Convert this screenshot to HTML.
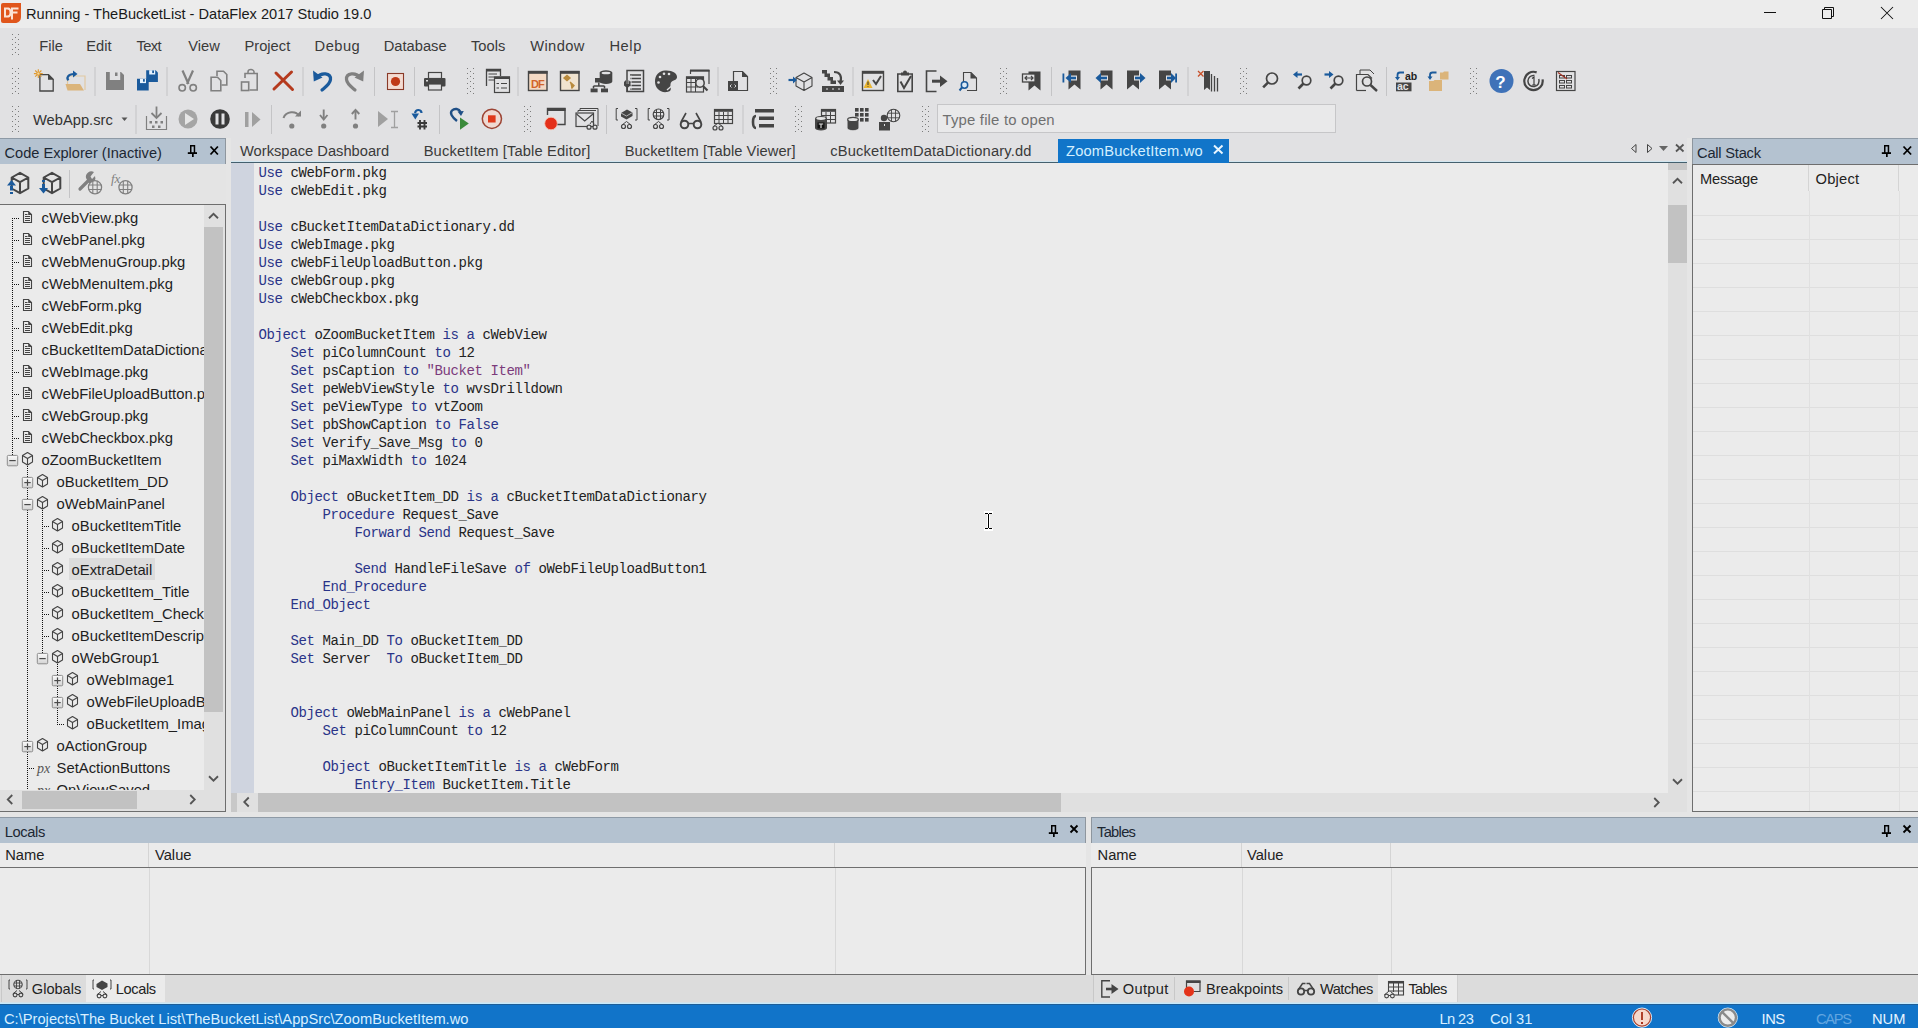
<!DOCTYPE html>
<html><head><meta charset="utf-8"><style>
html,body{margin:0;padding:0;background:#e1e1e3;}
body{width:1918px;height:1028px;position:relative;overflow:hidden;font-family:"Liberation Sans",sans-serif;}
body div, body svg{position:absolute;}
body div div{position:absolute;}
</style></head><body>
<div style="left:0px;top:0px;width:1918px;height:1028px;background:#e1e1e3;"></div>
<div style="left:0px;top:0px;width:1918px;height:28px;background:#ececec;"></div>
<div style="left:0px;top:138px;width:1918px;height:837px;background:#e5e5e5;"></div>
<div style="left:231px;top:138px;width:1456px;height:23px;background:#e1e1e3;"></div>
<div style="left:26px;top:5.24px;font:14.6px/19px 'Liberation Sans', sans-serif;color:#1a1a1a;white-space:pre;">Running - TheBucketList - DataFlex 2017 Studio 19.0</div>
<div style="left:39.3px;top:36.90px;font:14.7px/19px 'Liberation Sans', sans-serif;color:#3a3a3a;white-space:pre;">File</div>
<div style="left:86.3px;top:36.90px;font:14.7px/19px 'Liberation Sans', sans-serif;color:#3a3a3a;white-space:pre;">Edit</div>
<div style="left:136.4px;top:36.90px;font:14.7px/19px 'Liberation Sans', sans-serif;color:#3a3a3a;white-space:pre;letter-spacing:-0.55px;">Text</div>
<div style="left:188.2px;top:36.90px;font:14.7px/19px 'Liberation Sans', sans-serif;color:#3a3a3a;white-space:pre;">View</div>
<div style="left:244.5px;top:36.90px;font:14.7px/19px 'Liberation Sans', sans-serif;color:#3a3a3a;white-space:pre;">Project</div>
<div style="left:314.6px;top:36.90px;font:14.7px/19px 'Liberation Sans', sans-serif;color:#3a3a3a;white-space:pre;letter-spacing:0.45px;">Debug</div>
<div style="left:383.7px;top:36.90px;font:14.7px/19px 'Liberation Sans', sans-serif;color:#3a3a3a;white-space:pre;">Database</div>
<div style="left:471px;top:36.90px;font:14.7px/19px 'Liberation Sans', sans-serif;color:#3a3a3a;white-space:pre;">Tools</div>
<div style="left:530.2px;top:36.90px;font:14.7px/19px 'Liberation Sans', sans-serif;color:#3a3a3a;white-space:pre;letter-spacing:0.4px;">Window</div>
<div style="left:609.4px;top:36.90px;font:14.7px/19px 'Liberation Sans', sans-serif;color:#3a3a3a;white-space:pre;letter-spacing:0.6px;">Help</div>
<div style="left:0px;top:138px;width:226px;height:1px;background:#8e9aa6;"></div>
<div style="left:0px;top:139px;width:226px;height:25px;background:#b4c2d0;"></div>
<div style="left:4.5px;top:144.44px;font:14.6px/19px 'Liberation Sans', sans-serif;color:#1c2733;white-space:pre;">Code Explorer (Inactive)</div>
<div style="left:0px;top:164px;width:226px;height:40px;background:#e4e4e4;"></div>
<div style="left:0px;top:204px;width:226px;height:608px;background:#6e6e6e;"></div>
<div style="left:0px;top:205px;width:225px;height:606px;background:#ebebeb;"></div>
<div style="left:231px;top:162px;width:1456px;height:1px;background:#44606e;"></div>
<div style="left:231px;top:161px;width:1456px;height:1px;background:#d2e6f0;"></div>
<div style="left:231px;top:163px;width:1456px;height:649px;background:#ebebeb;"></div>
<div style="left:231px;top:163px;width:23px;height:630px;background:#cfd4df;"></div>
<div style="left:1668px;top:163px;width:19px;height:649px;background:#e0e0e0;"></div>
<div style="left:1668px;top:163px;width:19px;height:7px;background:#c8c8c8;"></div>
<div style="left:1668px;top:205px;width:19px;height:58px;background:#c2c2c2;"></div>
<div style="left:231px;top:793px;width:1437px;height:19px;background:#e0e0e0;"></div>
<div style="left:240px;top:142.40px;font:14.7px/19px 'Liberation Sans', sans-serif;color:#3a3a3a;white-space:pre;">Workspace Dashboard</div>
<div style="left:423.7px;top:142.40px;font:14.7px/19px 'Liberation Sans', sans-serif;color:#3a3a3a;white-space:pre;letter-spacing:0.14px;">BucketItem [Table Editor]</div>
<div style="left:624.7px;top:142.40px;font:14.7px/19px 'Liberation Sans', sans-serif;color:#3a3a3a;white-space:pre;letter-spacing:0.06px;">BucketItem [Table Viewer]</div>
<div style="left:830.2px;top:142.40px;font:14.7px/19px 'Liberation Sans', sans-serif;color:#3a3a3a;white-space:pre;letter-spacing:0.18px;">cBucketItemDataDictionary.dd</div>
<div style="left:1058px;top:139px;width:171px;height:24px;background:#1175c9;"></div>
<div style="left:1066px;top:142.40px;font:14.7px/19px 'Liberation Sans', sans-serif;color:#d4f0ff;white-space:pre;letter-spacing:0.17px;">ZoomBucketItem.wo</div>
<div style="left:1692px;top:138px;width:226px;height:1px;background:#8e9aa6;"></div>
<div style="left:1692px;top:139px;width:226px;height:25px;background:#b4c2d0;"></div>
<div style="left:1697px;top:143.90px;font:14.7px/19px 'Liberation Sans', sans-serif;color:#1c2733;white-space:pre;letter-spacing:-0.23px;">Call Stack</div>
<div style="left:1692px;top:164px;width:226px;height:648px;background:#6e6e6e;"></div>
<div style="left:1693px;top:165px;width:225px;height:646px;background:#ebebeb;"></div>
<div style="left:1700px;top:170.40px;font:14.7px/19px 'Liberation Sans', sans-serif;color:#222;white-space:pre;letter-spacing:-0.25px;">Message</div>
<div style="left:1815.6px;top:170.40px;font:14.7px/19px 'Liberation Sans', sans-serif;color:#222;white-space:pre;letter-spacing:0.2px;">Object</div>
<div style="left:0px;top:817px;width:1086px;height:1px;background:#8e9aa6;"></div>
<div style="left:0px;top:818px;width:1086px;height:25px;background:#b4c2d0;"></div>
<div style="left:4.7px;top:822.90px;font:14.7px/19px 'Liberation Sans', sans-serif;color:#1c2733;white-space:pre;letter-spacing:-0.36px;">Locals</div>
<div style="left:0px;top:843px;width:1086px;height:24px;background:#ebebeb;"></div>
<div style="left:0px;top:867px;width:1086px;height:108px;background:#6e6e6e;"></div>
<div style="left:0px;top:868px;width:1085px;height:106px;background:#ebebeb;"></div>
<div style="left:5.2px;top:845.90px;font:14.7px/19px 'Liberation Sans', sans-serif;color:#222;white-space:pre;">Name</div>
<div style="left:155px;top:845.90px;font:14.7px/19px 'Liberation Sans', sans-serif;color:#222;white-space:pre;">Value</div>
<div style="left:1091px;top:817px;width:827px;height:1px;background:#8e9aa6;"></div>
<div style="left:1091px;top:818px;width:827px;height:25px;background:#b4c2d0;"></div>
<div style="left:1097px;top:822.90px;font:14.7px/19px 'Liberation Sans', sans-serif;color:#1c2733;white-space:pre;letter-spacing:-0.7px;">Tables</div>
<div style="left:1091px;top:843px;width:827px;height:24px;background:#ebebeb;"></div>
<div style="left:1091px;top:867px;width:827px;height:108px;background:#6e6e6e;"></div>
<div style="left:1092px;top:868px;width:826px;height:106px;background:#ebebeb;"></div>
<div style="left:1097.6px;top:845.90px;font:14.7px/19px 'Liberation Sans', sans-serif;color:#222;white-space:pre;">Name</div>
<div style="left:1247px;top:845.90px;font:14.7px/19px 'Liberation Sans', sans-serif;color:#222;white-space:pre;">Value</div>
<div style="left:0px;top:1004px;width:1918px;height:24px;background:#1174c9;"></div>
<div style="left:4px;top:1009.90px;font:14.7px/19px 'Liberation Sans', sans-serif;color:#d8efff;white-space:pre;">C:\Projects\The Bucket List\TheBucketList\AppSrc\ZoomBucketItem.wo</div>
<div style="left:1439.5px;top:1009.90px;font:14.7px/19px 'Liberation Sans', sans-serif;color:#d8efff;white-space:pre;letter-spacing:-0.6px;">Ln 23</div>
<div style="left:1490px;top:1009.90px;font:14.7px/19px 'Liberation Sans', sans-serif;color:#d8efff;white-space:pre;">Col 31</div>
<div style="left:1761.6px;top:1009.90px;font:14.7px/19px 'Liberation Sans', sans-serif;color:#e8f4ff;white-space:pre;letter-spacing:-0.5px;">INS</div>
<div style="left:1816px;top:1009.90px;font:14.7px/19px 'Liberation Sans', sans-serif;color:#62a6e0;white-space:pre;letter-spacing:-1.3px;">CAPS</div>
<div style="left:1872px;top:1009.90px;font:14.7px/19px 'Liberation Sans', sans-serif;color:#e8f4ff;white-space:pre;">NUM</div>
<div style="left:254px;top:163px;width:1414px;height:630px;overflow:hidden">
<div style="left:4.4px;top:1.27px;font:14px/18px 'Liberation Mono', monospace;letter-spacing:-0.4px;white-space:pre"><span style="color:#2a3488">Use</span><span style="color:#222222"> cWebForm.pkg</span></div>
<div style="left:4.4px;top:19.27px;font:14px/18px 'Liberation Mono', monospace;letter-spacing:-0.4px;white-space:pre"><span style="color:#2a3488">Use</span><span style="color:#222222"> cWebEdit.pkg</span></div>
<div style="left:4.4px;top:55.27px;font:14px/18px 'Liberation Mono', monospace;letter-spacing:-0.4px;white-space:pre"><span style="color:#2a3488">Use</span><span style="color:#222222"> cBucketItemDataDictionary.dd</span></div>
<div style="left:4.4px;top:73.27px;font:14px/18px 'Liberation Mono', monospace;letter-spacing:-0.4px;white-space:pre"><span style="color:#2a3488">Use</span><span style="color:#222222"> cWebImage.pkg</span></div>
<div style="left:4.4px;top:91.27px;font:14px/18px 'Liberation Mono', monospace;letter-spacing:-0.4px;white-space:pre"><span style="color:#2a3488">Use</span><span style="color:#222222"> cWebFileUploadButton.pkg</span></div>
<div style="left:4.4px;top:109.27px;font:14px/18px 'Liberation Mono', monospace;letter-spacing:-0.4px;white-space:pre"><span style="color:#2a3488">Use</span><span style="color:#222222"> cWebGroup.pkg</span></div>
<div style="left:4.4px;top:127.27px;font:14px/18px 'Liberation Mono', monospace;letter-spacing:-0.4px;white-space:pre"><span style="color:#2a3488">Use</span><span style="color:#222222"> cWebCheckbox.pkg</span></div>
<div style="left:4.4px;top:163.27px;font:14px/18px 'Liberation Mono', monospace;letter-spacing:-0.4px;white-space:pre"><span style="color:#2a3488">Object</span><span style="color:#222222"> oZoomBucketItem </span><span style="color:#2a3488">is</span><span style="color:#222222"> </span><span style="color:#2a3488">a</span><span style="color:#222222"> cWebView</span></div>
<div style="left:4.4px;top:181.27px;font:14px/18px 'Liberation Mono', monospace;letter-spacing:-0.4px;white-space:pre"><span style="color:#222222">    </span><span style="color:#2a3488">Set</span><span style="color:#222222"> piColumnCount </span><span style="color:#2a3488">to</span><span style="color:#222222"> 12</span></div>
<div style="left:4.4px;top:199.27px;font:14px/18px 'Liberation Mono', monospace;letter-spacing:-0.4px;white-space:pre"><span style="color:#222222">    </span><span style="color:#2a3488">Set</span><span style="color:#222222"> psCaption </span><span style="color:#2a3488">to</span><span style="color:#222222"> </span><span style="color:#7b3b7b">&quot;Bucket Item&quot;</span></div>
<div style="left:4.4px;top:217.27px;font:14px/18px 'Liberation Mono', monospace;letter-spacing:-0.4px;white-space:pre"><span style="color:#222222">    </span><span style="color:#2a3488">Set</span><span style="color:#222222"> peWebViewStyle </span><span style="color:#2a3488">to</span><span style="color:#222222"> wvsDrilldown</span></div>
<div style="left:4.4px;top:235.27px;font:14px/18px 'Liberation Mono', monospace;letter-spacing:-0.4px;white-space:pre"><span style="color:#222222">    </span><span style="color:#2a3488">Set</span><span style="color:#222222"> peViewType </span><span style="color:#2a3488">to</span><span style="color:#222222"> vtZoom</span></div>
<div style="left:4.4px;top:253.27px;font:14px/18px 'Liberation Mono', monospace;letter-spacing:-0.4px;white-space:pre"><span style="color:#222222">    </span><span style="color:#2a3488">Set</span><span style="color:#222222"> pbShowCaption </span><span style="color:#2a3488">to</span><span style="color:#222222"> </span><span style="color:#2a3488">False</span></div>
<div style="left:4.4px;top:271.27px;font:14px/18px 'Liberation Mono', monospace;letter-spacing:-0.4px;white-space:pre"><span style="color:#222222">    </span><span style="color:#2a3488">Set</span><span style="color:#222222"> Verify_Save_Msg </span><span style="color:#2a3488">to</span><span style="color:#222222"> 0</span></div>
<div style="left:4.4px;top:289.27px;font:14px/18px 'Liberation Mono', monospace;letter-spacing:-0.4px;white-space:pre"><span style="color:#222222">    </span><span style="color:#2a3488">Set</span><span style="color:#222222"> piMaxWidth </span><span style="color:#2a3488">to</span><span style="color:#222222"> 1024</span></div>
<div style="left:4.4px;top:325.27px;font:14px/18px 'Liberation Mono', monospace;letter-spacing:-0.4px;white-space:pre"><span style="color:#222222">    </span><span style="color:#2a3488">Object</span><span style="color:#222222"> oBucketItem_DD </span><span style="color:#2a3488">is</span><span style="color:#222222"> </span><span style="color:#2a3488">a</span><span style="color:#222222"> cBucketItemDataDictionary</span></div>
<div style="left:4.4px;top:343.27px;font:14px/18px 'Liberation Mono', monospace;letter-spacing:-0.4px;white-space:pre"><span style="color:#222222">        </span><span style="color:#2a3488">Procedure</span><span style="color:#222222"> Request_Save</span></div>
<div style="left:4.4px;top:361.27px;font:14px/18px 'Liberation Mono', monospace;letter-spacing:-0.4px;white-space:pre"><span style="color:#222222">            </span><span style="color:#2a3488">Forward</span><span style="color:#222222"> </span><span style="color:#2a3488">Send</span><span style="color:#222222"> Request_Save</span></div>
<div style="left:4.4px;top:397.27px;font:14px/18px 'Liberation Mono', monospace;letter-spacing:-0.4px;white-space:pre"><span style="color:#222222">            </span><span style="color:#2a3488">Send</span><span style="color:#222222"> HandleFileSave </span><span style="color:#2a3488">of</span><span style="color:#222222"> oWebFileUploadButton1</span></div>
<div style="left:4.4px;top:415.27px;font:14px/18px 'Liberation Mono', monospace;letter-spacing:-0.4px;white-space:pre"><span style="color:#222222">        </span><span style="color:#2a3488">End_Procedure</span></div>
<div style="left:4.4px;top:433.27px;font:14px/18px 'Liberation Mono', monospace;letter-spacing:-0.4px;white-space:pre"><span style="color:#222222">    </span><span style="color:#2a3488">End_Object</span></div>
<div style="left:4.4px;top:469.27px;font:14px/18px 'Liberation Mono', monospace;letter-spacing:-0.4px;white-space:pre"><span style="color:#222222">    </span><span style="color:#2a3488">Set</span><span style="color:#222222"> Main_DD </span><span style="color:#2a3488">To</span><span style="color:#222222"> oBucketItem_DD</span></div>
<div style="left:4.4px;top:487.27px;font:14px/18px 'Liberation Mono', monospace;letter-spacing:-0.4px;white-space:pre"><span style="color:#222222">    </span><span style="color:#2a3488">Set</span><span style="color:#222222"> Server  </span><span style="color:#2a3488">To</span><span style="color:#222222"> oBucketItem_DD</span></div>
<div style="left:4.4px;top:541.27px;font:14px/18px 'Liberation Mono', monospace;letter-spacing:-0.4px;white-space:pre"><span style="color:#222222">    </span><span style="color:#2a3488">Object</span><span style="color:#222222"> oWebMainPanel </span><span style="color:#2a3488">is</span><span style="color:#222222"> </span><span style="color:#2a3488">a</span><span style="color:#222222"> cWebPanel</span></div>
<div style="left:4.4px;top:559.27px;font:14px/18px 'Liberation Mono', monospace;letter-spacing:-0.4px;white-space:pre"><span style="color:#222222">        </span><span style="color:#2a3488">Set</span><span style="color:#222222"> piColumnCount </span><span style="color:#2a3488">to</span><span style="color:#222222"> 12</span></div>
<div style="left:4.4px;top:595.27px;font:14px/18px 'Liberation Mono', monospace;letter-spacing:-0.4px;white-space:pre"><span style="color:#222222">        </span><span style="color:#2a3488">Object</span><span style="color:#222222"> oBucketItemTitle </span><span style="color:#2a3488">is</span><span style="color:#222222"> </span><span style="color:#2a3488">a</span><span style="color:#222222"> cWebForm</span></div>
<div style="left:4.4px;top:613.27px;font:14px/18px 'Liberation Mono', monospace;letter-spacing:-0.4px;white-space:pre"><span style="color:#222222">            </span><span style="color:#2a3488">Entry_Item</span><span style="color:#222222"> BucketItem.Title</span></div>
</div>
<svg style="left:1760px;top:0" width="150" height="28"><g transform="translate(-1760 0)"><rect x="1764" y="12" width="12" height="1" fill="#111"/><path d="M1822.5 9.5h9v9h-9z M1824.5 9.5v-2h9v9h-2" fill="none" stroke="#111" stroke-width="1"/><path d="M1881 7L1893 19M1893 7L1881 19" stroke="#111" stroke-width="1.05"/></g></svg>
<svg style="left:187px;top:145px;" width="12" height="13" viewBox="0 0 12 13"><path d="M3.75 8.2V0.75H7.45V8.2" fill="none" stroke="#000" stroke-width="1.5"/><rect x="0.8" y="7.2" width="9.2" height="1.8" fill="#000"/><rect x="5" y="9" width="1.7" height="3" fill="#000"/></svg>
<svg style="left:208.8px;top:144.8px;" width="10.399999999999977" height="11.0" viewBox="0 0 10.399999999999977 11.0"><path d="M1.5 1.5L8.899999999999977 9.5M8.899999999999977 1.5L1.5 9.5" stroke="#000" stroke-width="1.8"/></svg>
<svg style="left:1881px;top:145px;" width="12" height="13" viewBox="0 0 12 13"><path d="M3.75 8.2V0.75H7.45V8.2" fill="none" stroke="#000" stroke-width="1.5"/><rect x="0.8" y="7.2" width="9.2" height="1.8" fill="#000"/><rect x="5" y="9" width="1.7" height="3" fill="#000"/></svg>
<svg style="left:1901.6px;top:144.8px;" width="10.600000000000136" height="11.0" viewBox="0 0 10.600000000000136 11.0"><path d="M1.5 1.5L9.100000000000136 9.5M9.100000000000136 1.5L1.5 9.5" stroke="#000" stroke-width="1.8"/></svg>
<svg style="left:1048px;top:824.5px;" width="12" height="13" viewBox="0 0 12 13"><path d="M3.75 8.2V0.75H7.45V8.2" fill="none" stroke="#000" stroke-width="1.5"/><rect x="0.8" y="7.2" width="9.2" height="1.8" fill="#000"/><rect x="5" y="9" width="1.7" height="3" fill="#000"/></svg>
<svg style="left:1069px;top:824px;" width="10" height="10" viewBox="0 0 10 10"><path d="M1.5 1.5L8.5 8.5M8.5 1.5L1.5 8.5" stroke="#000" stroke-width="1.8"/></svg>
<svg style="left:1881px;top:824.5px;" width="12" height="13" viewBox="0 0 12 13"><path d="M3.75 8.2V0.75H7.45V8.2" fill="none" stroke="#000" stroke-width="1.5"/><rect x="0.8" y="7.2" width="9.2" height="1.8" fill="#000"/><rect x="5" y="9" width="1.7" height="3" fill="#000"/></svg>
<svg style="left:1902px;top:824px;" width="10" height="10" viewBox="0 0 10 10"><path d="M1.5 1.5L8.5 8.5M8.5 1.5L1.5 8.5" stroke="#000" stroke-width="1.8"/></svg>
<svg style="left:1630px;top:143px;" width="60" height="11" viewBox="0 0 60 11"><path d="M6 1.5V9.5L1.5 5.5Z" fill="none" stroke="#444" stroke-width="1"/><path d="M17.5 1.5V9.5L22 5.5Z" fill="none" stroke="#444" stroke-width="1"/><path d="M29 3H38L33.5 8Z" fill="#666"/><path d="M46 1.5L53.5 8.5M53.5 1.5L46 8.5" stroke="#555" stroke-width="1.8"/></svg>
<svg style="left:1212px;top:144px;" width="13" height="11" viewBox="0 0 13 11"><path d="M2 1.5L10.5 9.5M10.5 1.5L2 9.5" stroke="#e8f6ff" stroke-width="2"/></svg>
<svg style="left:1671px;top:174px" width="13" height="13"><g transform="translate(-1671 -174)"><path d="M1673.0 183.25L1677.5 178.75L1682.0 183.25" fill="none" stroke="#555" stroke-width="1.8"/></g></svg>
<svg style="left:1671px;top:775px" width="13" height="13"><g transform="translate(-1671 -775)"><path d="M1673.0 779.25L1677.5 783.75L1682.0 779.25" fill="none" stroke="#555" stroke-width="1.8"/></g></svg>
<svg style="left:240px;top:795px" width="13" height="13"><g transform="translate(-240 -795)"><path d="M248.75 797.5L244.25 802L248.75 806.5" fill="none" stroke="#555" stroke-width="1.8"/></g></svg>
<svg style="left:1650px;top:796px" width="13" height="13"><g transform="translate(-1650 -796)"><path d="M1654.25 798.0L1658.75 802.5L1654.25 807.0" fill="none" stroke="#555" stroke-width="1.8"/></g></svg>
<div style="left:258px;top:793px;width:803px;height:19px;background:#c2c2c2;"></div>
<div style="left:231px;top:793px;width:6px;height:19px;background:#c8c8c8;"></div>
<div style="left:1693px;top:215px;width:225px;height:1px;background:#dedede;"></div>
<div style="left:1693px;top:239px;width:225px;height:1px;background:#dedede;"></div>
<div style="left:1693px;top:263px;width:225px;height:1px;background:#dedede;"></div>
<div style="left:1693px;top:287px;width:225px;height:1px;background:#dedede;"></div>
<div style="left:1693px;top:311px;width:225px;height:1px;background:#dedede;"></div>
<div style="left:1693px;top:335px;width:225px;height:1px;background:#dedede;"></div>
<div style="left:1693px;top:359px;width:225px;height:1px;background:#dedede;"></div>
<div style="left:1693px;top:383px;width:225px;height:1px;background:#dedede;"></div>
<div style="left:1693px;top:407px;width:225px;height:1px;background:#dedede;"></div>
<div style="left:1693px;top:431px;width:225px;height:1px;background:#dedede;"></div>
<div style="left:1693px;top:455px;width:225px;height:1px;background:#dedede;"></div>
<div style="left:1693px;top:479px;width:225px;height:1px;background:#dedede;"></div>
<div style="left:1693px;top:503px;width:225px;height:1px;background:#dedede;"></div>
<div style="left:1693px;top:527px;width:225px;height:1px;background:#dedede;"></div>
<div style="left:1693px;top:551px;width:225px;height:1px;background:#dedede;"></div>
<div style="left:1693px;top:575px;width:225px;height:1px;background:#dedede;"></div>
<div style="left:1693px;top:599px;width:225px;height:1px;background:#dedede;"></div>
<div style="left:1693px;top:623px;width:225px;height:1px;background:#dedede;"></div>
<div style="left:1693px;top:647px;width:225px;height:1px;background:#dedede;"></div>
<div style="left:1693px;top:671px;width:225px;height:1px;background:#dedede;"></div>
<div style="left:1693px;top:695px;width:225px;height:1px;background:#dedede;"></div>
<div style="left:1693px;top:719px;width:225px;height:1px;background:#dedede;"></div>
<div style="left:1693px;top:743px;width:225px;height:1px;background:#dedede;"></div>
<div style="left:1693px;top:767px;width:225px;height:1px;background:#dedede;"></div>
<div style="left:1693px;top:791px;width:225px;height:1px;background:#dedede;"></div>
<div style="left:1808px;top:165px;width:1px;height:26px;background:#d4d4d4;"></div>
<div style="left:1898px;top:165px;width:1px;height:26px;background:#d4d4d4;"></div>
<div style="left:1809px;top:191px;width:1px;height:620px;background:#e0e0e0;"></div>
<div style="left:1899px;top:191px;width:1px;height:620px;background:#e0e0e0;"></div>
<div style="left:148px;top:843px;width:1px;height:24px;background:#d4d4d4;"></div>
<div style="left:834px;top:843px;width:1px;height:24px;background:#d4d4d4;"></div>
<div style="left:149px;top:868px;width:1px;height:106px;background:#d8d8d8;"></div>
<div style="left:835px;top:868px;width:1px;height:106px;background:#d8d8d8;"></div>
<div style="left:1241px;top:843px;width:1px;height:24px;background:#d4d4d4;"></div>
<div style="left:1390px;top:843px;width:1px;height:24px;background:#d4d4d4;"></div>
<div style="left:1242px;top:868px;width:1px;height:106px;background:#d8d8d8;"></div>
<div style="left:1391px;top:868px;width:1px;height:106px;background:#d8d8d8;"></div>
<svg style="left:982px;top:510px" width="14" height="22"><g transform="translate(-982 -510)"><path d="M984 512.5H993M984 529.5H993M988.5 513V529" stroke="#fff" stroke-width="3"/><rect x="985" y="513" width="3" height="1" fill="#000"/><rect x="989" y="513" width="3" height="1" fill="#000"/><rect x="988" y="514" width="1" height="14" fill="#000"/><rect x="985" y="528" width="3" height="1" fill="#000"/><rect x="989" y="528" width="3" height="1" fill="#000"/></g></svg>
<div style="left:1692px;top:138px;width:1px;height:26px;background:#8e969e;"></div>
<div style="left:225px;top:138px;width:1px;height:26px;background:#8e969e;"></div>
<div style="left:1091px;top:817px;width:1px;height:26px;background:#8e969e;"></div>
<div style="left:1085px;top:817px;width:1px;height:26px;background:#8e969e;"></div>
<svg style="left:0;top:0" width="1918" height="140"><rect x="12" y="34" width="1" height="1" fill="#7c7c7c"/><rect x="18" y="34" width="1" height="1" fill="#7c7c7c"/><rect x="15" y="37" width="1" height="1" fill="#7c7c7c"/><rect x="12" y="39" width="1" height="1" fill="#7c7c7c"/><rect x="18" y="39" width="1" height="1" fill="#7c7c7c"/><rect x="15" y="42" width="1" height="1" fill="#7c7c7c"/><rect x="12" y="44" width="1" height="1" fill="#7c7c7c"/><rect x="18" y="44" width="1" height="1" fill="#7c7c7c"/><rect x="15" y="47" width="1" height="1" fill="#7c7c7c"/><rect x="12" y="49" width="1" height="1" fill="#7c7c7c"/><rect x="18" y="49" width="1" height="1" fill="#7c7c7c"/><rect x="15" y="52" width="1" height="1" fill="#7c7c7c"/><rect x="12" y="54" width="1" height="1" fill="#7c7c7c"/><rect x="18" y="54" width="1" height="1" fill="#7c7c7c"/><rect x="12" y="68" width="1" height="1" fill="#7c7c7c"/><rect x="18" y="68" width="1" height="1" fill="#7c7c7c"/><rect x="15" y="71" width="1" height="1" fill="#7c7c7c"/><rect x="12" y="73" width="1" height="1" fill="#7c7c7c"/><rect x="18" y="73" width="1" height="1" fill="#7c7c7c"/><rect x="15" y="76" width="1" height="1" fill="#7c7c7c"/><rect x="12" y="78" width="1" height="1" fill="#7c7c7c"/><rect x="18" y="78" width="1" height="1" fill="#7c7c7c"/><rect x="15" y="81" width="1" height="1" fill="#7c7c7c"/><rect x="12" y="83" width="1" height="1" fill="#7c7c7c"/><rect x="18" y="83" width="1" height="1" fill="#7c7c7c"/><rect x="15" y="86" width="1" height="1" fill="#7c7c7c"/><rect x="12" y="88" width="1" height="1" fill="#7c7c7c"/><rect x="18" y="88" width="1" height="1" fill="#7c7c7c"/><rect x="15" y="91" width="1" height="1" fill="#7c7c7c"/><rect x="12" y="93" width="1" height="1" fill="#7c7c7c"/><rect x="18" y="93" width="1" height="1" fill="#7c7c7c"/><rect x="12" y="106" width="1" height="1" fill="#7c7c7c"/><rect x="18" y="106" width="1" height="1" fill="#7c7c7c"/><rect x="15" y="109" width="1" height="1" fill="#7c7c7c"/><rect x="12" y="111" width="1" height="1" fill="#7c7c7c"/><rect x="18" y="111" width="1" height="1" fill="#7c7c7c"/><rect x="15" y="114" width="1" height="1" fill="#7c7c7c"/><rect x="12" y="116" width="1" height="1" fill="#7c7c7c"/><rect x="18" y="116" width="1" height="1" fill="#7c7c7c"/><rect x="15" y="119" width="1" height="1" fill="#7c7c7c"/><rect x="12" y="121" width="1" height="1" fill="#7c7c7c"/><rect x="18" y="121" width="1" height="1" fill="#7c7c7c"/><rect x="15" y="124" width="1" height="1" fill="#7c7c7c"/><rect x="12" y="126" width="1" height="1" fill="#7c7c7c"/><rect x="18" y="126" width="1" height="1" fill="#7c7c7c"/><rect x="15" y="129" width="1" height="1" fill="#7c7c7c"/><rect x="12" y="131" width="1" height="1" fill="#7c7c7c"/><rect x="18" y="131" width="1" height="1" fill="#7c7c7c"/><rect x="467" y="68" width="1" height="1" fill="#7c7c7c"/><rect x="473" y="68" width="1" height="1" fill="#7c7c7c"/><rect x="470" y="71" width="1" height="1" fill="#7c7c7c"/><rect x="467" y="73" width="1" height="1" fill="#7c7c7c"/><rect x="473" y="73" width="1" height="1" fill="#7c7c7c"/><rect x="470" y="76" width="1" height="1" fill="#7c7c7c"/><rect x="467" y="78" width="1" height="1" fill="#7c7c7c"/><rect x="473" y="78" width="1" height="1" fill="#7c7c7c"/><rect x="470" y="81" width="1" height="1" fill="#7c7c7c"/><rect x="467" y="83" width="1" height="1" fill="#7c7c7c"/><rect x="473" y="83" width="1" height="1" fill="#7c7c7c"/><rect x="470" y="86" width="1" height="1" fill="#7c7c7c"/><rect x="467" y="88" width="1" height="1" fill="#7c7c7c"/><rect x="473" y="88" width="1" height="1" fill="#7c7c7c"/><rect x="470" y="91" width="1" height="1" fill="#7c7c7c"/><rect x="467" y="93" width="1" height="1" fill="#7c7c7c"/><rect x="473" y="93" width="1" height="1" fill="#7c7c7c"/><rect x="770" y="68" width="1" height="1" fill="#7c7c7c"/><rect x="776" y="68" width="1" height="1" fill="#7c7c7c"/><rect x="773" y="71" width="1" height="1" fill="#7c7c7c"/><rect x="770" y="73" width="1" height="1" fill="#7c7c7c"/><rect x="776" y="73" width="1" height="1" fill="#7c7c7c"/><rect x="773" y="76" width="1" height="1" fill="#7c7c7c"/><rect x="770" y="78" width="1" height="1" fill="#7c7c7c"/><rect x="776" y="78" width="1" height="1" fill="#7c7c7c"/><rect x="773" y="81" width="1" height="1" fill="#7c7c7c"/><rect x="770" y="83" width="1" height="1" fill="#7c7c7c"/><rect x="776" y="83" width="1" height="1" fill="#7c7c7c"/><rect x="773" y="86" width="1" height="1" fill="#7c7c7c"/><rect x="770" y="88" width="1" height="1" fill="#7c7c7c"/><rect x="776" y="88" width="1" height="1" fill="#7c7c7c"/><rect x="773" y="91" width="1" height="1" fill="#7c7c7c"/><rect x="770" y="93" width="1" height="1" fill="#7c7c7c"/><rect x="776" y="93" width="1" height="1" fill="#7c7c7c"/><rect x="1000" y="68" width="1" height="1" fill="#7c7c7c"/><rect x="1006" y="68" width="1" height="1" fill="#7c7c7c"/><rect x="1003" y="71" width="1" height="1" fill="#7c7c7c"/><rect x="1000" y="73" width="1" height="1" fill="#7c7c7c"/><rect x="1006" y="73" width="1" height="1" fill="#7c7c7c"/><rect x="1003" y="76" width="1" height="1" fill="#7c7c7c"/><rect x="1000" y="78" width="1" height="1" fill="#7c7c7c"/><rect x="1006" y="78" width="1" height="1" fill="#7c7c7c"/><rect x="1003" y="81" width="1" height="1" fill="#7c7c7c"/><rect x="1000" y="83" width="1" height="1" fill="#7c7c7c"/><rect x="1006" y="83" width="1" height="1" fill="#7c7c7c"/><rect x="1003" y="86" width="1" height="1" fill="#7c7c7c"/><rect x="1000" y="88" width="1" height="1" fill="#7c7c7c"/><rect x="1006" y="88" width="1" height="1" fill="#7c7c7c"/><rect x="1003" y="91" width="1" height="1" fill="#7c7c7c"/><rect x="1000" y="93" width="1" height="1" fill="#7c7c7c"/><rect x="1006" y="93" width="1" height="1" fill="#7c7c7c"/><rect x="1240" y="68" width="1" height="1" fill="#7c7c7c"/><rect x="1246" y="68" width="1" height="1" fill="#7c7c7c"/><rect x="1243" y="71" width="1" height="1" fill="#7c7c7c"/><rect x="1240" y="73" width="1" height="1" fill="#7c7c7c"/><rect x="1246" y="73" width="1" height="1" fill="#7c7c7c"/><rect x="1243" y="76" width="1" height="1" fill="#7c7c7c"/><rect x="1240" y="78" width="1" height="1" fill="#7c7c7c"/><rect x="1246" y="78" width="1" height="1" fill="#7c7c7c"/><rect x="1243" y="81" width="1" height="1" fill="#7c7c7c"/><rect x="1240" y="83" width="1" height="1" fill="#7c7c7c"/><rect x="1246" y="83" width="1" height="1" fill="#7c7c7c"/><rect x="1243" y="86" width="1" height="1" fill="#7c7c7c"/><rect x="1240" y="88" width="1" height="1" fill="#7c7c7c"/><rect x="1246" y="88" width="1" height="1" fill="#7c7c7c"/><rect x="1243" y="91" width="1" height="1" fill="#7c7c7c"/><rect x="1240" y="93" width="1" height="1" fill="#7c7c7c"/><rect x="1246" y="93" width="1" height="1" fill="#7c7c7c"/><rect x="1470" y="68" width="1" height="1" fill="#7c7c7c"/><rect x="1476" y="68" width="1" height="1" fill="#7c7c7c"/><rect x="1473" y="71" width="1" height="1" fill="#7c7c7c"/><rect x="1470" y="73" width="1" height="1" fill="#7c7c7c"/><rect x="1476" y="73" width="1" height="1" fill="#7c7c7c"/><rect x="1473" y="76" width="1" height="1" fill="#7c7c7c"/><rect x="1470" y="78" width="1" height="1" fill="#7c7c7c"/><rect x="1476" y="78" width="1" height="1" fill="#7c7c7c"/><rect x="1473" y="81" width="1" height="1" fill="#7c7c7c"/><rect x="1470" y="83" width="1" height="1" fill="#7c7c7c"/><rect x="1476" y="83" width="1" height="1" fill="#7c7c7c"/><rect x="1473" y="86" width="1" height="1" fill="#7c7c7c"/><rect x="1470" y="88" width="1" height="1" fill="#7c7c7c"/><rect x="1476" y="88" width="1" height="1" fill="#7c7c7c"/><rect x="1473" y="91" width="1" height="1" fill="#7c7c7c"/><rect x="1470" y="93" width="1" height="1" fill="#7c7c7c"/><rect x="1476" y="93" width="1" height="1" fill="#7c7c7c"/><rect x="524" y="106" width="1" height="1" fill="#7c7c7c"/><rect x="530" y="106" width="1" height="1" fill="#7c7c7c"/><rect x="527" y="109" width="1" height="1" fill="#7c7c7c"/><rect x="524" y="111" width="1" height="1" fill="#7c7c7c"/><rect x="530" y="111" width="1" height="1" fill="#7c7c7c"/><rect x="527" y="114" width="1" height="1" fill="#7c7c7c"/><rect x="524" y="116" width="1" height="1" fill="#7c7c7c"/><rect x="530" y="116" width="1" height="1" fill="#7c7c7c"/><rect x="527" y="119" width="1" height="1" fill="#7c7c7c"/><rect x="524" y="121" width="1" height="1" fill="#7c7c7c"/><rect x="530" y="121" width="1" height="1" fill="#7c7c7c"/><rect x="527" y="124" width="1" height="1" fill="#7c7c7c"/><rect x="524" y="126" width="1" height="1" fill="#7c7c7c"/><rect x="530" y="126" width="1" height="1" fill="#7c7c7c"/><rect x="527" y="129" width="1" height="1" fill="#7c7c7c"/><rect x="524" y="131" width="1" height="1" fill="#7c7c7c"/><rect x="530" y="131" width="1" height="1" fill="#7c7c7c"/><rect x="795" y="106" width="1" height="1" fill="#7c7c7c"/><rect x="801" y="106" width="1" height="1" fill="#7c7c7c"/><rect x="798" y="109" width="1" height="1" fill="#7c7c7c"/><rect x="795" y="111" width="1" height="1" fill="#7c7c7c"/><rect x="801" y="111" width="1" height="1" fill="#7c7c7c"/><rect x="798" y="114" width="1" height="1" fill="#7c7c7c"/><rect x="795" y="116" width="1" height="1" fill="#7c7c7c"/><rect x="801" y="116" width="1" height="1" fill="#7c7c7c"/><rect x="798" y="119" width="1" height="1" fill="#7c7c7c"/><rect x="795" y="121" width="1" height="1" fill="#7c7c7c"/><rect x="801" y="121" width="1" height="1" fill="#7c7c7c"/><rect x="798" y="124" width="1" height="1" fill="#7c7c7c"/><rect x="795" y="126" width="1" height="1" fill="#7c7c7c"/><rect x="801" y="126" width="1" height="1" fill="#7c7c7c"/><rect x="798" y="129" width="1" height="1" fill="#7c7c7c"/><rect x="795" y="131" width="1" height="1" fill="#7c7c7c"/><rect x="801" y="131" width="1" height="1" fill="#7c7c7c"/><rect x="922" y="106" width="1" height="1" fill="#7c7c7c"/><rect x="928" y="106" width="1" height="1" fill="#7c7c7c"/><rect x="925" y="109" width="1" height="1" fill="#7c7c7c"/><rect x="922" y="111" width="1" height="1" fill="#7c7c7c"/><rect x="928" y="111" width="1" height="1" fill="#7c7c7c"/><rect x="925" y="114" width="1" height="1" fill="#7c7c7c"/><rect x="922" y="116" width="1" height="1" fill="#7c7c7c"/><rect x="928" y="116" width="1" height="1" fill="#7c7c7c"/><rect x="925" y="119" width="1" height="1" fill="#7c7c7c"/><rect x="922" y="121" width="1" height="1" fill="#7c7c7c"/><rect x="928" y="121" width="1" height="1" fill="#7c7c7c"/><rect x="925" y="124" width="1" height="1" fill="#7c7c7c"/><rect x="922" y="126" width="1" height="1" fill="#7c7c7c"/><rect x="928" y="126" width="1" height="1" fill="#7c7c7c"/><rect x="925" y="129" width="1" height="1" fill="#7c7c7c"/><rect x="922" y="131" width="1" height="1" fill="#7c7c7c"/><rect x="928" y="131" width="1" height="1" fill="#7c7c7c"/><rect x="94.5" y="67" width="1" height="29" fill="#c4c4c6"/><rect x="166.5" y="67" width="1" height="29" fill="#c4c4c6"/><rect x="302.5" y="67" width="1" height="29" fill="#c4c4c6"/><rect x="374" y="67" width="1" height="29" fill="#c4c4c6"/><rect x="414" y="67" width="1" height="29" fill="#c4c4c6"/><rect x="517.5" y="67" width="1" height="29" fill="#c4c4c6"/><rect x="717.5" y="67" width="1" height="29" fill="#c4c4c6"/><rect x="852.5" y="67" width="1" height="29" fill="#c4c4c6"/><rect x="1051" y="67" width="1" height="29" fill="#c4c4c6"/><rect x="1187.5" y="67" width="1" height="29" fill="#c4c4c6"/><rect x="1386" y="67" width="1" height="29" fill="#c4c4c6"/><rect x="135.5" y="105" width="1" height="29" fill="#c4c4c6"/><rect x="271" y="105" width="1" height="29" fill="#c4c4c6"/><rect x="439" y="105" width="1" height="29" fill="#c4c4c6"/><rect x="606" y="105" width="1" height="29" fill="#c4c4c6"/><rect x="742.5" y="105" width="1" height="29" fill="#c4c4c6"/><path d="M39.9 91V74.6H48.5L53.2 79.3V91Z" fill="none" stroke="#454545" stroke-width="1.3"/><path d="M48 74L53.8 79.8H48Z" fill="#454545"/><g stroke="#e09a30" stroke-width="1.1"><path d="M38.3 69.2V78M33.9 73.6H42.7M35.2 70.5L41.4 76.7M41.4 70.5L35.2 76.7"/></g><circle cx="38.3" cy="73.6" r="1.5" fill="#f4d8a0" stroke="#e09a30" stroke-width="0.8"/><path d="M67.5 89V76H85V90" fill="none" stroke="#e2c9a2" stroke-width="1.2"/><path d="M65.5 84H80L84 90.5H67.5Z" fill="#dbb47a"/><path d="M68.6 80.2C66 78 68 74 74 74" fill="none" stroke="#1a5a9c" stroke-width="2.2"/><path d="M73 70.5L77.5 74L73 77.5Z" fill="#1a5a9c"/><path d="M106 72H121L124 75V90H106Z" fill="#808080"/><rect x="109.8" y="72" width="10.4" height="8" fill="#e1e1e3"/><rect x="115" y="72.5" width="2.5" height="3.5" fill="#808080"/><path d="M146.2 70.2H155.7L157.89999999999998 72.4V82.0H146.2Z" fill="#1a5a9c"/><rect x="149.2" y="70.2" width="6" height="4.3" fill="#e8f4ff"/><rect x="152.2" y="70.5" width="1.8" height="2.6" fill="#1a5a9c"/><path d="M137 78.8H146.5L148.7 81.0V90.6H137Z" fill="#1a5a9c"/><rect x="140" y="78.8" width="6" height="4.3" fill="#e8f4ff"/><rect x="143" y="79.1" width="1.8" height="2.6" fill="#1a5a9c"/><path d="M182.5 70.5L188.5 84M193 70.5L187 84" stroke="#808080" stroke-width="2.2"/><circle cx="182.2" cy="87.8" r="3.2" fill="none" stroke="#808080" stroke-width="1.6"/><circle cx="193.2" cy="87.8" r="3.2" fill="none" stroke="#808080" stroke-width="1.6"/><path d="M217 76V71.2H223.5L226.8 74.5V85H221.5" fill="none" stroke="#808080" stroke-width="1.6"/><path d="M211.1 90.7V77.2H217.5L220.8 80.5V90.7Z" fill="none" stroke="#808080" stroke-width="1.6"/><path d="M245 78V73.5H257.2V90H249.5" fill="none" stroke="#808080" stroke-width="1.6"/><path d="M248 73.5V71.8A3 2.2 0 0 1 254 71.8V73.5" fill="none" stroke="#808080" stroke-width="1.5"/><rect x="241.5" y="82" width="7.2" height="8.5" fill="none" stroke="#808080" stroke-width="1.6"/><path d="M274 89L291.5 72M276 73L292.5 89.5" stroke="#b53a1e" stroke-width="3" stroke-linecap="round"/><path d="M317.5 77C321 72.5 331 72.5 330.5 79.5C330 84 325.5 87 322 90" fill="none" stroke="#1a5a9c" stroke-width="3.2" stroke-linecap="round"/><path d="M313 70.5L313.8 81.5L322.5 77.5Z" fill="#1a5a9c"/><path d="M359.5 77C356 72.5 346 72.5 346.5 79.5C347 84 351.5 87 355 90" fill="none" stroke="#808080" stroke-width="3.2" stroke-linecap="round"/><path d="M364 70.5L363.2 81.5L354.5 77.5Z" fill="#808080"/><rect x="387.5" y="73.5" width="16" height="16" fill="#f4dcd2" stroke="#8a3a28" stroke-width="1.1"/><circle cx="395.5" cy="81.5" r="4.6" fill="#c03a18"/><rect x="428.5" y="72.5" width="13" height="6" fill="none" stroke="#454545" stroke-width="1.2"/><rect x="424" y="78" width="21.5" height="8.5" rx="1" fill="#454545"/><rect x="426" y="80" width="2" height="1.5" fill="#ddd"/><rect x="428.5" y="84" width="13" height="6" fill="#e1e1e3" stroke="#454545" stroke-width="1.2"/><path d="M486.5 86V69.5H500.5V76" fill="none" stroke="#454545" stroke-width="1.3"/><rect x="486" y="69" width="14.5" height="2.5" fill="#454545"/><path d="M488.5 74H497" stroke="#454545" stroke-width="1"/><path d="M488.5 77H494M488.5 80H494" stroke="#454545" stroke-width="1"/><rect x="494.5" y="77" width="15" height="15.5" fill="#e1e1e3" stroke="#454545" stroke-width="1.2"/><rect x="494" y="76.5" width="16" height="2.5" fill="#454545"/><path d="M496.5 83.5H499M501 83.5H507M496.5 88H499M501 88H507" stroke="#454545" stroke-width="1.2"/><rect x="528.5" y="71.5" width="18.5" height="19" fill="#f3d9c4" stroke="#454545" stroke-width="1.4"/><rect x="528" y="71" width="19.5" height="2.8" fill="#454545"/><text x="531" y="87.5" font-family="Liberation Sans" font-weight="bold" font-size="11" fill="#d2642a" letter-spacing="-1">DF</text><rect x="560.5" y="71.5" width="18.5" height="19" fill="#f0e3cf" stroke="#454545" stroke-width="1.4"/><rect x="560" y="71" width="19.5" height="2.8" fill="#454545"/><path d="M564 78L567 75.5L570 78L567 80.5Z M570 82L574 85.5L571.5 88.5" fill="#b88a3c" stroke="#b88a3c" stroke-width="1.4"/><ellipse cx="606" cy="72.8" rx="6.3" ry="2.6" fill="#454545"/><path d="M599.7 72.8V81.5A6.3 2.6 0 0 0 612.3 81.5V72.8" fill="#454545"/><ellipse cx="606" cy="73" rx="4.5" ry="1.3" fill="#e1e1e3"/><rect x="595" y="78" width="7.5" height="4.5" fill="#454545"/><path d="M598.8 82.5V86M593.5 86H604.5M593.5 86V88.5M604.5 86V88.5" stroke="#454545" stroke-width="1.5" fill="none"/><rect x="590.6" y="88.5" width="7" height="3.8" fill="#454545"/><rect x="601" y="88.5" width="7" height="3.8" fill="#454545"/><rect x="627" y="70.5" width="16.5" height="21" fill="none" stroke="#454545" stroke-width="1.5"/><path d="M630 75H641M630 78.5H641M630 82H641M630 85.5H641M630 89H641" stroke="#454545" stroke-width="1.6"/><path d="M631 75.5V89.5" stroke="#e1e1e3" stroke-width="1"/><path d="M626 80L624 82V85.5L626.5 87.5V92H628V87.5L630.5 85.5V82L628.5 80V84H626Z" fill="#454545"/><path d="M665 70.5C672 70 677.5 73 677 77.5C676.5 81 671 80 670.5 84C670 88 673 91 667 92C660 93 655 88 655 81.5C655 75 659 70.8 665 70.5Z" fill="#454545"/><circle cx="660" cy="77" r="1.3" fill="#e1e1e3"/><circle cx="664" cy="73.8" r="1.3" fill="#e1e1e3"/><circle cx="669" cy="74" r="1.3" fill="#e1e1e3"/><circle cx="658.5" cy="82.5" r="1.3" fill="#e1e1e3"/><path d="M667 90L675 83" stroke="#e1e1e3" stroke-width="1.3"/><rect x="690" y="69.5" width="19.5" height="2.2" fill="#454545"/><path d="M690.5 70V74M709 70V84" stroke="#454545" stroke-width="1.2"/><rect x="686.5" y="77" width="17" height="15" fill="#e1e1e3" stroke="#454545" stroke-width="1.2"/><rect x="686" y="76.5" width="18" height="2.5" fill="#454545"/><path d="M686.5 82.5H698M686.5 87H698M691 79V92M695.5 79V92" stroke="#454545" stroke-width="1"/><circle cx="700" cy="83" r="4.2" fill="#e1e1e3" stroke="#454545" stroke-width="1.5"/><path d="M703 86L707.5 90.5" stroke="#454545" stroke-width="2.2"/><path d="M733.5 86V71.5H742.5L747.5 76.5V90.5H738" fill="none" stroke="#454545" stroke-width="1.2"/><path d="M742 71L748 77H742Z" fill="#454545"/><rect x="728" y="81" width="10" height="10" fill="#454545"/><path d="M731.5 84.5L730 86L731.5 87.5M734.5 84.5L736 86L734.5 87.5" stroke="#e1e1e3" stroke-width="0.9" fill="none"/><path d="M804 73L812 77.5V86L804 90.5L796 86V77.5Z M796 77.5L804 82L812 77.5M804 82V90.5" fill="none" stroke="#454545" stroke-width="1.1" stroke-linejoin="round"/><path d="M788.5 80H794.5" stroke="#1a5a9c" stroke-width="2.2"/><path d="M793 76.5L797 80L793 83.5Z" fill="#1a5a9c"/><path d="M822 70H827V73.5H830V77H833V80.5H836V84H830.5V80.5H827.5V77H824.5V73.5H822Z" fill="#454545"/><rect x="822" y="86" width="22" height="6" fill="#454545"/><path d="M826 89H828M832 89H834M838 89H840" stroke="#e1e1e3" stroke-width="1"/><path d="M834 72C840 72 842 76 840.5 82" fill="none" stroke="#454545" stroke-width="2.2"/><path d="M837 80.5L840.5 85L844 80.5Z" fill="#454545"/><rect x="862.5" y="71.5" width="21" height="19" fill="#e1e1e3" stroke="#454545" stroke-width="1.4"/><rect x="862" y="71" width="22" height="2.8" fill="#454545"/><path d="M868 79L872.5 88H863.5Z" fill="#e9b530"/><path d="M868 81.5V85M868 86.3V87" stroke="#333" stroke-width="1"/><path d="M873 80L876 84L881 76" fill="none" stroke="#454545" stroke-width="2"/><path d="M901 74H897.8V91.5H912.2V74H909" fill="none" stroke="#454545" stroke-width="1.6"/><path d="M901 75.5V72.5H903A2 2 0 0 1 907 72.5H909V75.5Z" fill="#454545"/><path d="M900.5 81.5L904 88L911 76" fill="none" stroke="#454545" stroke-width="2"/><path d="M936.5 71H926.5V91.5H936.5" fill="none" stroke="#454545" stroke-width="1.6"/><path d="M932 81.2H941" stroke="#454545" stroke-width="3"/><path d="M940 75.5L947.5 81.2L940 87Z" fill="#454545"/><path d="M963.5 85V72.5H971L976.5 78V90.5H967" fill="none" stroke="#454545" stroke-width="1.1"/><path d="M970.5 72L977 78.5H970.5Z" fill="#454545"/><circle cx="964.5" cy="85" r="3.2" fill="#dceaf6" stroke="#1a5a9c" stroke-width="1.5"/><path d="M962 87.5L959.5 90.5" stroke="#1a5a9c" stroke-width="2"/><path d="M1028.5 71.5H1040.5V90.5L1034.5 85.5L1028.5 90.5Z" fill="#454545"/><rect x="1022.5" y="74" width="12.5" height="8" fill="#e1e1e3" stroke="#454545" stroke-width="1.3"/><path d="M1025 78H1033M1027 76L1025 78L1027 80M1031 76L1033 78L1031 80" fill="none" stroke="#454545" stroke-width="1.2"/><path d="M1068.5 70.5H1080.5V89.5L1074.5 84.5L1068.5 89.5Z" fill="#454545"/><rect x="1062.5" y="73.5" width="1.8" height="9" fill="#1a5a9c"/><path d="M1066 78H1077" stroke="#e1e1e3" stroke-width="5"/><path d="M1069 78H1076" stroke="#1a5a9c" stroke-width="2.6"/><path d="M1071 73L1065.5 78L1071 83Z" fill="#1a5a9c"/><path d="M1100.5 70.5H1112.5V89.5L1106.5 84.5L1100.5 89.5Z" fill="#454545"/><path d="M1098 78H1108" stroke="#e1e1e3" stroke-width="5"/><path d="M1100 78H1107" stroke="#1a5a9c" stroke-width="2.6"/><path d="M1101 73L1095.5 78L1101 83Z" fill="#1a5a9c"/><path d="M1127 70.5H1139V89.5L1133 84.5L1127 89.5Z" fill="#454545"/><path d="M1134 78H1144" stroke="#e1e1e3" stroke-width="5"/><path d="M1135 78H1141" stroke="#1a5a9c" stroke-width="2.6"/><path d="M1140 73L1145.5 78L1140 83Z" fill="#1a5a9c"/><path d="M1159 70.5H1171V89.5L1165 84.5L1159 89.5Z" fill="#454545"/><path d="M1166 78H1176" stroke="#e1e1e3" stroke-width="5"/><path d="M1167 78H1172" stroke="#1a5a9c" stroke-width="2.6"/><path d="M1171 73L1176 78L1171 83Z" fill="#1a5a9c"/><rect x="1175.2" y="73.5" width="1.8" height="9" fill="#1a5a9c"/><path d="M1204 71H1210V90L1207 87.5L1204 90Z" fill="#454545"/><path d="M1211.5 74V91.5M1214.5 76V91.5M1217.5 78V91.5" stroke="#454545" stroke-width="1.3"/><path d="M1198 71L1203.5 76.5M1203.5 71L1198 76.5" stroke="#c8502a" stroke-width="1.3"/><circle cx="1272" cy="78.5" r="5.5" fill="none" stroke="#454545" stroke-width="1.7"/><path d="M1268.15 82.35L1263.15 87.35" stroke="#454545" stroke-width="2.6"/><circle cx="1306.5" cy="80.5" r="4.3" fill="none" stroke="#454545" stroke-width="1.7"/><path d="M1303.49 83.51L1298.49 88.51" stroke="#454545" stroke-width="2.6"/><path d="M1296 74.5H1302" stroke="#1a5a9c" stroke-width="2.2"/><path d="M1297.5 71L1293 74.5L1297.5 78Z" fill="#1a5a9c"/><circle cx="1338.5" cy="80.5" r="4.3" fill="none" stroke="#454545" stroke-width="1.7"/><path d="M1335.49 83.51L1330.49 88.51" stroke="#454545" stroke-width="2.6"/><path d="M1324.5 74.5H1330" stroke="#1a5a9c" stroke-width="2.2"/><path d="M1329 71L1333.5 74.5L1329 78Z" fill="#1a5a9c"/><path d="M1360 74.5V70H1370L1374 74" fill="none" stroke="#454545" stroke-width="1"/><path d="M1356.5 90.5V74.5H1368L1372 78.5" fill="none" stroke="#454545" stroke-width="1.2"/><path d="M1356.5 90.5H1366" stroke="#454545" stroke-width="1.2"/><circle cx="1367" cy="81.5" r="4.5" fill="none" stroke="#454545" stroke-width="1.7"/><path d="M1370.5 85L1377 91" stroke="#454545" stroke-width="2.4"/><text x="1405" y="80" font-family="Liberation Sans" font-weight="bold" font-size="10.5" fill="#222">ab</text><rect x="1396" y="82.5" width="15.5" height="8.8" fill="#454545"/><text x="1397" y="90.3" font-family="Liberation Sans" font-weight="bold" font-size="10.5" fill="#e1e1e3">ac</text><path d="M1404 72.5H1400A2.5 2.5 0 0 0 1397.5 75V78" fill="none" stroke="#1a5a9c" stroke-width="1.8"/><path d="M1395 77L1397.5 80.5L1400 77Z" fill="#1a5a9c"/><path d="M1440 72.5H1443L1444 71.5H1448.5V79.5H1440Z" fill="#dbb47a"/><path d="M1429 81H1433.5L1434.5 80H1442V91H1429Z" fill="#dbb47a"/><path d="M1436.5 72.5H1432.5A2.5 2.5 0 0 0 1430 75V77.5" fill="none" stroke="#1a5a9c" stroke-width="1.8"/><path d="M1427.5 76.5L1430 80L1432.5 76.5Z" fill="#1a5a9c"/><circle cx="1501.5" cy="81" r="12" fill="#3f72b8"/><text x="1495.2" y="88.2" font-family="Liberation Sans" font-weight="bold" font-size="17" fill="#fff">?</text><path d="M1536.65 72.35A9.2 9.2 0 1 0 1542.56 79.40" fill="none" stroke="#454545" stroke-width="2.2"/><path d="M1534.47 75.49A5.6 5.6 0 1 0 1538.76 79.08" fill="none" stroke="#454545" stroke-width="1.5"/><path d="M1532 78.5L1534 77V85M1532.2 85H1535.8" fill="none" stroke="#333" stroke-width="1.1"/><rect x="1556.5" y="71.5" width="18.5" height="19" fill="none" stroke="#454545" stroke-width="1.2"/><rect x="1559.5" y="75.5" width="5" height="2.5" fill="none" stroke="#454545" stroke-width="1"/><rect x="1566.5" y="75.5" width="5" height="2.5" fill="none" stroke="#454545" stroke-width="1"/><rect x="1559.5" y="80.5" width="5" height="2.5" fill="none" stroke="#454545" stroke-width="1"/><rect x="1566.5" y="80.5" width="5" height="2.5" fill="none" stroke="#454545" stroke-width="1"/><rect x="1559.5" y="85.5" width="5" height="2.5" fill="none" stroke="#454545" stroke-width="1"/><rect x="1566.5" y="85.5" width="5" height="2.5" fill="none" stroke="#454545" stroke-width="1"/><path d="M1558 72.5L1567 79" stroke="#a03020" stroke-width="1.2"/><path d="M121.5 117.5H127.5L124.5 121Z" fill="#555"/><path d="M146.5 116V129.5H166.5V116" fill="none" stroke="#808080" stroke-width="1.2"/><path d="M156.5 106.5V117" stroke="#808080" stroke-width="1.8"/><path d="M151.5 113L156.5 118L161.5 113" fill="none" stroke="#808080" stroke-width="1.8"/><rect x="149.5" y="121" width="2.5" height="2.5" fill="#808080"/><rect x="155" y="121" width="2.5" height="2.5" fill="#808080"/><rect x="160.5" y="121" width="2.5" height="2.5" fill="#808080"/><rect x="152" y="125.5" width="2.5" height="2.5" fill="#808080"/><rect x="158" y="125.5" width="2.5" height="2.5" fill="#808080"/><circle cx="188" cy="119" r="9.5" fill="#a5a5a5"/><path d="M185 113V125L194 119Z" fill="#e6e6e6"/><circle cx="220" cy="119" r="9.8" fill="#3a3a3a"/><rect x="215.5" y="113.5" width="3" height="11" fill="#e1e1e3"/><rect x="221.5" y="113.5" width="3" height="11" fill="#e1e1e3"/><rect x="245" y="112" width="3.5" height="15" fill="#a0a0a0"/><path d="M252 112V127L260.5 119.5Z" fill="#a0a0a0"/><path d="M283.5 118C286 111 296 110.5 299 116" fill="none" stroke="#808080" stroke-width="2"/><path d="M295 116.5H301V110.5Z" fill="#808080"/><circle cx="291.8" cy="126" r="2.6" fill="#808080"/><path d="M323.7 109.5V119" stroke="#808080" stroke-width="1.9"/><path d="M320 115L323.7 119.5L327.5 115" fill="none" stroke="#808080" stroke-width="1.9"/><circle cx="323.7" cy="126" r="2.6" fill="#808080"/><path d="M355.5 110V119.5" stroke="#808080" stroke-width="1.9"/><path d="M351.8 114L355.5 110L359.3 114" fill="none" stroke="#808080" stroke-width="1.9"/><circle cx="355.5" cy="126" r="2.6" fill="#808080"/><path d="M378 111V127L388 119Z" fill="#a0a0a0"/><path d="M391 111.5H398M391 127.5H398M394.5 111.5V127.5" stroke="#a0a0a0" stroke-width="1.3"/><path d="M421.5 113C421.5 109.5 416 108.5 415 113" fill="none" stroke="#1a5a9c" stroke-width="2.2"/><path d="M411.5 113.5L415.3 119.5L419 113.5Z" fill="#1a5a9c"/><path d="M417.5 123H427M417.5 126.5H427M420 120V129.5M424.5 120V129.5" stroke="#3a3a3a" stroke-width="1.9"/><path d="M457 121C452 117 449.5 113 452 110.5C454.5 108 459 108.5 460.5 112" fill="none" stroke="#1f4f86" stroke-width="2.4"/><path d="M457.5 111.5L461 116L463.8 111Z" fill="#1f4f86"/><path d="M460 117.5V129.7L468.8 123.6Z" fill="#3a8a3a"/><circle cx="491.9" cy="118.8" r="9.6" fill="#efd9d2" stroke="#9c4434" stroke-width="1.5"/><rect x="488" y="115.3" width="7.6" height="7.2" fill="#e0391b"/><path d="M547.5 115V108.5H565V124.5H557" fill="none" stroke="#454545" stroke-width="1.4"/><rect x="547" y="108" width="18.5" height="3" fill="#454545"/><circle cx="551" cy="123.5" r="6.3" fill="#e4301a" stroke="#f4c8b8" stroke-width="0.8"/><path d="M580 110V108.5H598V126M578 112V110.5H596" fill="none" stroke="#454545" stroke-width="1"/><rect x="576" y="113" width="17.5" height="13.5" fill="#e1e1e3" stroke="#454545" stroke-width="1.2"/><path d="M576.5 114L584.7 121L593 114" fill="none" stroke="#454545" stroke-width="1.2"/><circle cx="589" cy="127.2" r="2" fill="#e1e1e3" stroke="#454545" stroke-width="1.2"/><circle cx="595" cy="127.2" r="2" fill="#e1e1e3" stroke="#454545" stroke-width="1.2"/><path d="M590 124L592 121L594 124" fill="none" stroke="#454545" stroke-width="1"/><path d="M618 108.5H616.2V120H618M635 108.5H637V120H635" fill="none" stroke="#454545" stroke-width="1"/><path d="M621 113L627 109.5L632.5 112.5V116L626.5 119.5L621 116.5Z" fill="#454545"/><path d="M621 113L626.5 116L632.5 112.5" fill="none" stroke="#e1e1e3" stroke-width="0.7"/><circle cx="623.5" cy="126.5" r="2" fill="none" stroke="#454545" stroke-width="1.2"/><circle cx="629.5" cy="126.5" r="2" fill="none" stroke="#454545" stroke-width="1.2"/><path d="M622.0 125.0L626.5 121.5L631.0 125.0" fill="none" stroke="#454545" stroke-width="1"/><path d="M650 108.5H648.2V120H650M667 108.5H669V120H667" fill="none" stroke="#454545" stroke-width="1"/><circle cx="658.5" cy="114.3" r="5.3" fill="none" stroke="#454545" stroke-width="1.2"/><path d="M653.5 112.5H663.5M653.5 116H663.5M656.5 109.5V119.3M660.5 109.5V119.3" stroke="#454545" stroke-width="1"/><circle cx="655.5" cy="126.5" r="2" fill="none" stroke="#454545" stroke-width="1.2"/><circle cx="661.5" cy="126.5" r="2" fill="none" stroke="#454545" stroke-width="1.2"/><path d="M654.0 125.0L658.5 121.5L663.0 125.0" fill="none" stroke="#454545" stroke-width="1"/><circle cx="684.5" cy="124.5" r="3.8" fill="none" stroke="#454545" stroke-width="2"/><circle cx="697.5" cy="124.5" r="3.8" fill="none" stroke="#454545" stroke-width="2"/><path d="M688 123.5H694M681 122L686 113M701 122L696 113" fill="none" stroke="#454545" stroke-width="1.6"/><rect x="714.5" y="109.5" width="18" height="14" fill="none" stroke="#454545" stroke-width="1.2"/><rect x="714" y="109" width="19" height="2.8" fill="#454545"/><path d="M714.5 115.5H732.5M714.5 119.5H732.5M719 112V123.5M723.5 112V123.5M728 112V123.5" stroke="#454545" stroke-width="1"/><circle cx="715" cy="128" r="2" fill="none" stroke="#454545" stroke-width="1.2"/><circle cx="721" cy="128" r="2" fill="none" stroke="#454545" stroke-width="1.2"/><path d="M713.5 126.5L718 123L722.5 126.5" fill="none" stroke="#454545" stroke-width="1"/><rect x="755" y="109" width="19" height="3.5" fill="#454545"/><rect x="759" y="116.5" width="15" height="3.5" fill="#454545"/><rect x="759" y="124" width="15" height="3.5" fill="#454545"/><path d="M756 116C752 116 752 128 756 128" fill="none" stroke="#454545" stroke-width="2.6"/><rect x="821.5" y="109.5" width="14" height="13.5" fill="none" stroke="#454545" stroke-width="1.2"/><rect x="821" y="109" width="15" height="2.8" fill="#454545"/><path d="M821.5 115.5H835.5M821.5 119.5H835.5M826 112V123M830.5 112V123" stroke="#454545" stroke-width="1"/><path d="M815 118.5V128A6 2.5 0 0 0 827 128V118.5Z" fill="#454545"/><ellipse cx="821" cy="118.5" rx="5.3" ry="2" fill="#e6e6e6" stroke="#454545" stroke-width="1.2"/><rect x="817.5" y="122.5" width="7" height="6" fill="#111"/><path d="M818.8 124H823.2M821 124V128" stroke="#e6e6e6" stroke-width="1.1"/><g fill="#454545"><rect x="855" y="108" width="3.6" height="3.6"/><rect x="860" y="108" width="3.6" height="3.6"/><rect x="865" y="108" width="3.6" height="3.6"/><rect x="855" y="113" width="3.6" height="3.6"/><rect x="860" y="113" width="3.6" height="3.6"/><rect x="865" y="113" width="3.6" height="3.6"/><rect x="860" y="118" width="3.6" height="3.6"/><rect x="865" y="118" width="3.6" height="3.6"/></g><path d="M847.2 119.5V128A5.8 2.6 0 0 0 858.8 128V119.5Z" fill="#454545" stroke="#e1e1e3" stroke-width="0.6"/><ellipse cx="853" cy="119.5" rx="5.3" ry="2.1" fill="#e6e6e6" stroke="#454545" stroke-width="1.2"/><circle cx="893.5" cy="115.5" r="6.3" fill="none" stroke="#454545" stroke-width="1.1"/><path d="M887.5 113.2H899.5M887.5 117.8H899.5M891.5 109.5V121.5M895.5 109.5V121.5" stroke="#454545" stroke-width="0.9"/><circle cx="884" cy="118" r="3.2" fill="#454545"/><path d="M879 122H890V130.5H879Z" fill="#454545"/><path d="M884.5 124V126" stroke="#e1e1e3" stroke-width="1"/></svg>
<div style="left:33px;top:111.40px;font:14.7px/19px 'Liberation Sans', sans-serif;color:#333;white-space:pre;">WebApp.src</div>
<div style="left:937px;top:104px;width:399px;height:29px;background:#c6c6c8;"></div>
<div style="left:938px;top:105px;width:397px;height:27px;background:#e9e9ea;"></div>
<div style="left:942.5px;top:111.13px;font:14.9px/19px 'Liberation Sans', sans-serif;color:#707070;white-space:pre;letter-spacing:0.18px;">Type file to open</div>
<svg style="left:0;top:0" width="226" height="204"><path d="M20 172.8L28.3 177.5V188.5L20 193.2L11.7 188.5V177.5Z M11.7 177.5L20 182.2L28.3 177.5M20 182.2V193.2" fill="none" stroke="#454545" stroke-width="2" stroke-linejoin="round"/><path d="M11.5 186V190.5" stroke="#1a5a9c" stroke-width="3"/><path d="M7 185.5L11.5 180L16 185.5Z" fill="#1a5a9c"/><rect x="10" y="192" width="3" height="2" fill="#1a5a9c"/><path d="M52 172.8L60.3 177.5V188.5L52 193.2L43.7 188.5V177.5Z M43.7 177.5L52 182.2L60.3 177.5M52 182.2V193.2" fill="none" stroke="#454545" stroke-width="2" stroke-linejoin="round"/><path d="M43.5 184V188" stroke="#1a5a9c" stroke-width="3"/><path d="M39 188L43.5 193.5L48 188Z" fill="#1a5a9c"/><rect x="42" y="180" width="3" height="2" fill="#1a5a9c"/><rect x="69" y="170" width="1" height="28" fill="#c4c4c6"/><path d="M80 189L89 180" stroke="#808080" stroke-width="3.2" stroke-linecap="round"/><path d="M86 178A5.5 5.5 0 0 1 94 172L90.5 176.5L92 179L95 176A5.5 5.5 0 0 1 89 183.5Z" fill="#808080"/><circle cx="95" cy="187.3" r="6.6" fill="#e4e4e4" stroke="#808080" stroke-width="1.3"/><path d="M88.5 185H101.5M88.5 189.5H101.5M92.8 181V193.5M97.2 181V193.5" stroke="#808080" stroke-width="1.1"/><text x="111" y="183" font-family="Liberation Serif" font-style="italic" font-size="13" fill="#808080">fx</text><circle cx="125.5" cy="187.3" r="6.6" fill="#e4e4e4" stroke="#808080" stroke-width="1.3"/><path d="M119 185H132M119 189.5H132M123.3 181V193.5M127.7 181V193.5" stroke="#808080" stroke-width="1.1"/></svg>
<svg style="left:0;top:0" width="24" height="26"><path d="M1 5A2 2 0 0 1 3 3H21V17C21 20.5 18.5 23 15 23H3A2 2 0 0 1 1 21Z" fill="#e0561c"/><path d="M4 7.5H7.5C10.5 7.5 11.5 9.5 11.5 12.5C11.5 15.5 10.5 17.5 7.5 17.5H4Z M6 9.5V15.5H7.3C9 15.5 9.5 14.5 9.5 12.5C9.5 10.5 9 9.5 7.3 9.5Z" fill="#fbe3d6" fill-rule="evenodd"/><path d="M11 7.5H18.5V9.5H13V11.5H17.5V13.5H13V19.5H11Z" fill="#fbe3d6"/></svg>
<div style="left:1px;top:205px;width:203px;height:585px;background:#ebebeb;"></div>
<div style="left:204px;top:205px;width:21px;height:585px;background:#e0e0e0;"></div>
<div style="left:204px;top:227px;width:19px;height:485px;background:#c2c2c2;"></div>
<svg style="left:207px;top:209px" width="13" height="13"><g transform="translate(-207 -209)"><path d="M209.0 218.25L213.5 213.75L218.0 218.25" fill="none" stroke="#555" stroke-width="1.8"/></g></svg>
<svg style="left:207px;top:772px" width="13" height="13"><g transform="translate(-207 -772)"><path d="M209.0 776.25L213.5 780.75L218.0 776.25" fill="none" stroke="#555" stroke-width="1.8"/></g></svg>
<div style="left:0px;top:790px;width:225px;height:21px;background:#e0e0e0;"></div>
<div style="left:0px;top:811px;width:226px;height:1px;background:#6e6e6e;"></div>
<div style="left:22px;top:791px;width:115px;height:18px;background:#c2c2c2;"></div>
<svg style="left:3px;top:793px" width="13" height="13"><g transform="translate(-3 -793)"><path d="M12.25 795.0L7.75 799.5L12.25 804.0" fill="none" stroke="#555" stroke-width="1.8"/></g></svg>
<svg style="left:186px;top:793px" width="13" height="13"><g transform="translate(-186 -793)"><path d="M190.25 795.0L194.75 799.5L190.25 804.0" fill="none" stroke="#555" stroke-width="1.8"/></g></svg>
<svg style="left:0;top:0" width="226" height="811"><defs><linearGradient id="bg" x1="0" y1="0" x2="0" y2="1"><stop offset="0" stop-color="#fafafa"/><stop offset="1" stop-color="#d4d4d4"/></linearGradient><clipPath id="tc"><rect x="1" y="205" width="203" height="585"/></clipPath></defs><g clip-path="url(#tc)"><rect x="69" y="558" width="86" height="22" fill="#dcdcdc"/><path d="M12.5 218V455" stroke="#111" stroke-width="1" stroke-dasharray="1 1"/><path d="M27.5 466V790" stroke="#111" stroke-width="1" stroke-dasharray="1 1"/><path d="M42.5 510V653" stroke="#111" stroke-width="1" stroke-dasharray="1 1"/><path d="M57.5 664V726" stroke="#111" stroke-width="1" stroke-dasharray="1 1"/><path d="M12 218.5H19" stroke="#111" stroke-width="1" stroke-dasharray="1 1"/><path d="M23.5 211.5H28.5L31.5 214.5V222.5H23.5Z" fill="none" stroke="#444" stroke-width="1.1"/><path d="M28.2 211.5L31.7 215H28.2Z" fill="#444"/><path d="M25 214.5H27.5M25 216.5H30M25 218.5H30M25 220.5H30" stroke="#444" stroke-width="1"/><path d="M12 240.5H19" stroke="#111" stroke-width="1" stroke-dasharray="1 1"/><path d="M23.5 233.5H28.5L31.5 236.5V244.5H23.5Z" fill="none" stroke="#444" stroke-width="1.1"/><path d="M28.2 233.5L31.7 237H28.2Z" fill="#444"/><path d="M25 236.5H27.5M25 238.5H30M25 240.5H30M25 242.5H30" stroke="#444" stroke-width="1"/><path d="M12 262.5H19" stroke="#111" stroke-width="1" stroke-dasharray="1 1"/><path d="M23.5 255.5H28.5L31.5 258.5V266.5H23.5Z" fill="none" stroke="#444" stroke-width="1.1"/><path d="M28.2 255.5L31.7 259H28.2Z" fill="#444"/><path d="M25 258.5H27.5M25 260.5H30M25 262.5H30M25 264.5H30" stroke="#444" stroke-width="1"/><path d="M12 284.5H19" stroke="#111" stroke-width="1" stroke-dasharray="1 1"/><path d="M23.5 277.5H28.5L31.5 280.5V288.5H23.5Z" fill="none" stroke="#444" stroke-width="1.1"/><path d="M28.2 277.5L31.7 281H28.2Z" fill="#444"/><path d="M25 280.5H27.5M25 282.5H30M25 284.5H30M25 286.5H30" stroke="#444" stroke-width="1"/><path d="M12 306.5H19" stroke="#111" stroke-width="1" stroke-dasharray="1 1"/><path d="M23.5 299.5H28.5L31.5 302.5V310.5H23.5Z" fill="none" stroke="#444" stroke-width="1.1"/><path d="M28.2 299.5L31.7 303H28.2Z" fill="#444"/><path d="M25 302.5H27.5M25 304.5H30M25 306.5H30M25 308.5H30" stroke="#444" stroke-width="1"/><path d="M12 328.5H19" stroke="#111" stroke-width="1" stroke-dasharray="1 1"/><path d="M23.5 321.5H28.5L31.5 324.5V332.5H23.5Z" fill="none" stroke="#444" stroke-width="1.1"/><path d="M28.2 321.5L31.7 325H28.2Z" fill="#444"/><path d="M25 324.5H27.5M25 326.5H30M25 328.5H30M25 330.5H30" stroke="#444" stroke-width="1"/><path d="M12 350.5H19" stroke="#111" stroke-width="1" stroke-dasharray="1 1"/><path d="M23.5 343.5H28.5L31.5 346.5V354.5H23.5Z" fill="none" stroke="#444" stroke-width="1.1"/><path d="M28.2 343.5L31.7 347H28.2Z" fill="#444"/><path d="M25 346.5H27.5M25 348.5H30M25 350.5H30M25 352.5H30" stroke="#444" stroke-width="1"/><path d="M12 372.5H19" stroke="#111" stroke-width="1" stroke-dasharray="1 1"/><path d="M23.5 365.5H28.5L31.5 368.5V376.5H23.5Z" fill="none" stroke="#444" stroke-width="1.1"/><path d="M28.2 365.5L31.7 369H28.2Z" fill="#444"/><path d="M25 368.5H27.5M25 370.5H30M25 372.5H30M25 374.5H30" stroke="#444" stroke-width="1"/><path d="M12 394.5H19" stroke="#111" stroke-width="1" stroke-dasharray="1 1"/><path d="M23.5 387.5H28.5L31.5 390.5V398.5H23.5Z" fill="none" stroke="#444" stroke-width="1.1"/><path d="M28.2 387.5L31.7 391H28.2Z" fill="#444"/><path d="M25 390.5H27.5M25 392.5H30M25 394.5H30M25 396.5H30" stroke="#444" stroke-width="1"/><path d="M12 416.5H19" stroke="#111" stroke-width="1" stroke-dasharray="1 1"/><path d="M23.5 409.5H28.5L31.5 412.5V420.5H23.5Z" fill="none" stroke="#444" stroke-width="1.1"/><path d="M28.2 409.5L31.7 413H28.2Z" fill="#444"/><path d="M25 412.5H27.5M25 414.5H30M25 416.5H30M25 418.5H30" stroke="#444" stroke-width="1"/><path d="M12 438.5H19" stroke="#111" stroke-width="1" stroke-dasharray="1 1"/><path d="M23.5 431.5H28.5L31.5 434.5V442.5H23.5Z" fill="none" stroke="#444" stroke-width="1.1"/><path d="M28.2 431.5L31.7 435H28.2Z" fill="#444"/><path d="M25 434.5H27.5M25 436.5H30M25 438.5H30M25 440.5H30" stroke="#444" stroke-width="1"/><rect x="7.3" y="455.4" width="10.4" height="10.4" rx="1" fill="url(#bg)" stroke="#8c8c8c" stroke-width="1"/><path d="M9.3 460.6H15.7" stroke="#4a4a4a" stroke-width="1.2"/><path d="M27.5 452.5L32.5 455.5V462L27.5 465L22.5 462V455.5Z M22.5 455.5L27.5 458.5L32.5 455.5 M27.5 458.5V465" fill="none" stroke="#444" stroke-width="1.1" stroke-linejoin="round"/><rect x="22.3" y="477.4" width="10.4" height="10.4" rx="1" fill="url(#bg)" stroke="#8c8c8c" stroke-width="1"/><path d="M24.3 482.6H30.7" stroke="#4a4a4a" stroke-width="1.2"/><path d="M27.5 479.4V485.8" stroke="#4a4a4a" stroke-width="1.2"/><path d="M42.5 474.5L47.5 477.5V484L42.5 487L37.5 484V477.5Z M37.5 477.5L42.5 480.5L47.5 477.5 M42.5 480.5V487" fill="none" stroke="#444" stroke-width="1.1" stroke-linejoin="round"/><rect x="22.3" y="499.4" width="10.4" height="10.4" rx="1" fill="url(#bg)" stroke="#8c8c8c" stroke-width="1"/><path d="M24.3 504.6H30.7" stroke="#4a4a4a" stroke-width="1.2"/><path d="M42.5 496.5L47.5 499.5V506L42.5 509L37.5 506V499.5Z M37.5 499.5L42.5 502.5L47.5 499.5 M42.5 502.5V509" fill="none" stroke="#444" stroke-width="1.1" stroke-linejoin="round"/><path d="M42 526.5H49" stroke="#111" stroke-width="1" stroke-dasharray="1 1"/><path d="M57.5 518.5L62.5 521.5V528L57.5 531L52.5 528V521.5Z M52.5 521.5L57.5 524.5L62.5 521.5 M57.5 524.5V531" fill="none" stroke="#444" stroke-width="1.1" stroke-linejoin="round"/><path d="M42 548.5H49" stroke="#111" stroke-width="1" stroke-dasharray="1 1"/><path d="M57.5 540.5L62.5 543.5V550L57.5 553L52.5 550V543.5Z M52.5 543.5L57.5 546.5L62.5 543.5 M57.5 546.5V553" fill="none" stroke="#444" stroke-width="1.1" stroke-linejoin="round"/><path d="M42 570.5H49" stroke="#111" stroke-width="1" stroke-dasharray="1 1"/><path d="M57.5 562.5L62.5 565.5V572L57.5 575L52.5 572V565.5Z M52.5 565.5L57.5 568.5L62.5 565.5 M57.5 568.5V575" fill="none" stroke="#444" stroke-width="1.1" stroke-linejoin="round"/><path d="M42 592.5H49" stroke="#111" stroke-width="1" stroke-dasharray="1 1"/><path d="M57.5 584.5L62.5 587.5V594L57.5 597L52.5 594V587.5Z M52.5 587.5L57.5 590.5L62.5 587.5 M57.5 590.5V597" fill="none" stroke="#444" stroke-width="1.1" stroke-linejoin="round"/><path d="M42 614.5H49" stroke="#111" stroke-width="1" stroke-dasharray="1 1"/><path d="M57.5 606.5L62.5 609.5V616L57.5 619L52.5 616V609.5Z M52.5 609.5L57.5 612.5L62.5 609.5 M57.5 612.5V619" fill="none" stroke="#444" stroke-width="1.1" stroke-linejoin="round"/><path d="M42 636.5H49" stroke="#111" stroke-width="1" stroke-dasharray="1 1"/><path d="M57.5 628.5L62.5 631.5V638L57.5 641L52.5 638V631.5Z M52.5 631.5L57.5 634.5L62.5 631.5 M57.5 634.5V641" fill="none" stroke="#444" stroke-width="1.1" stroke-linejoin="round"/><rect x="37.3" y="653.4" width="10.4" height="10.4" rx="1" fill="url(#bg)" stroke="#8c8c8c" stroke-width="1"/><path d="M39.3 658.6H45.7" stroke="#4a4a4a" stroke-width="1.2"/><path d="M57.5 650.5L62.5 653.5V660L57.5 663L52.5 660V653.5Z M52.5 653.5L57.5 656.5L62.5 653.5 M57.5 656.5V663" fill="none" stroke="#444" stroke-width="1.1" stroke-linejoin="round"/><rect x="52.3" y="675.4" width="10.4" height="10.4" rx="1" fill="url(#bg)" stroke="#8c8c8c" stroke-width="1"/><path d="M54.3 680.6H60.7" stroke="#4a4a4a" stroke-width="1.2"/><path d="M57.5 677.4V683.8" stroke="#4a4a4a" stroke-width="1.2"/><path d="M72.5 672.5L77.5 675.5V682L72.5 685L67.5 682V675.5Z M67.5 675.5L72.5 678.5L77.5 675.5 M72.5 678.5V685" fill="none" stroke="#444" stroke-width="1.1" stroke-linejoin="round"/><rect x="52.3" y="697.4" width="10.4" height="10.4" rx="1" fill="url(#bg)" stroke="#8c8c8c" stroke-width="1"/><path d="M54.3 702.6H60.7" stroke="#4a4a4a" stroke-width="1.2"/><path d="M57.5 699.4V705.8" stroke="#4a4a4a" stroke-width="1.2"/><path d="M72.5 694.5L77.5 697.5V704L72.5 707L67.5 704V697.5Z M67.5 697.5L72.5 700.5L77.5 697.5 M72.5 700.5V707" fill="none" stroke="#444" stroke-width="1.1" stroke-linejoin="round"/><path d="M57 724.5H64" stroke="#111" stroke-width="1" stroke-dasharray="1 1"/><path d="M72.5 716.5L77.5 719.5V726L72.5 729L67.5 726V719.5Z M67.5 719.5L72.5 722.5L77.5 719.5 M72.5 722.5V729" fill="none" stroke="#444" stroke-width="1.1" stroke-linejoin="round"/><rect x="22.3" y="741.4" width="10.4" height="10.4" rx="1" fill="url(#bg)" stroke="#8c8c8c" stroke-width="1"/><path d="M24.3 746.6H30.7" stroke="#4a4a4a" stroke-width="1.2"/><path d="M27.5 743.4V749.8" stroke="#4a4a4a" stroke-width="1.2"/><path d="M42.5 738.5L47.5 741.5V748L42.5 751L37.5 748V741.5Z M37.5 741.5L42.5 744.5L47.5 741.5 M42.5 744.5V751" fill="none" stroke="#444" stroke-width="1.1" stroke-linejoin="round"/><path d="M27 768.5H34" stroke="#111" stroke-width="1" stroke-dasharray="1 1"/><path d="M27 790.5H34" stroke="#111" stroke-width="1" stroke-dasharray="1 1"/></g></svg>
<div style="left:1px;top:205px;width:203px;height:585px;overflow:hidden">
<div style="left:40.6px;top:4.37px;font:14.8px/19px 'Liberation Sans', sans-serif;color:#1e1e1e;white-space:pre">cWebView.pkg</div>
<div style="left:40.6px;top:26.37px;font:14.8px/19px 'Liberation Sans', sans-serif;color:#1e1e1e;white-space:pre">cWebPanel.pkg</div>
<div style="left:40.6px;top:48.37px;font:14.8px/19px 'Liberation Sans', sans-serif;color:#1e1e1e;white-space:pre">cWebMenuGroup.pkg</div>
<div style="left:40.6px;top:70.37px;font:14.8px/19px 'Liberation Sans', sans-serif;color:#1e1e1e;white-space:pre">cWebMenuItem.pkg</div>
<div style="left:40.6px;top:92.37px;font:14.8px/19px 'Liberation Sans', sans-serif;color:#1e1e1e;white-space:pre">cWebForm.pkg</div>
<div style="left:40.6px;top:114.37px;font:14.8px/19px 'Liberation Sans', sans-serif;color:#1e1e1e;white-space:pre">cWebEdit.pkg</div>
<div style="left:40.6px;top:136.37px;font:14.8px/19px 'Liberation Sans', sans-serif;color:#1e1e1e;white-space:pre">cBucketItemDataDictionary.dd</div>
<div style="left:40.6px;top:158.37px;font:14.8px/19px 'Liberation Sans', sans-serif;color:#1e1e1e;white-space:pre">cWebImage.pkg</div>
<div style="left:40.6px;top:180.37px;font:14.8px/19px 'Liberation Sans', sans-serif;color:#1e1e1e;white-space:pre">cWebFileUploadButton.pkg</div>
<div style="left:40.6px;top:202.37px;font:14.8px/19px 'Liberation Sans', sans-serif;color:#1e1e1e;white-space:pre">cWebGroup.pkg</div>
<div style="left:40.6px;top:224.37px;font:14.8px/19px 'Liberation Sans', sans-serif;color:#1e1e1e;white-space:pre">cWebCheckbox.pkg</div>
<div style="left:40.6px;top:246.37px;font:14.8px/19px 'Liberation Sans', sans-serif;color:#1e1e1e;white-space:pre">oZoomBucketItem</div>
<div style="left:55.6px;top:268.37px;font:14.8px/19px 'Liberation Sans', sans-serif;color:#1e1e1e;white-space:pre">oBucketItem_DD</div>
<div style="left:55.6px;top:290.37px;font:14.8px/19px 'Liberation Sans', sans-serif;color:#1e1e1e;white-space:pre">oWebMainPanel</div>
<div style="left:70.6px;top:312.37px;font:14.8px/19px 'Liberation Sans', sans-serif;color:#1e1e1e;white-space:pre">oBucketItemTitle</div>
<div style="left:70.6px;top:334.37px;font:14.8px/19px 'Liberation Sans', sans-serif;color:#1e1e1e;white-space:pre">oBucketItemDate</div>
<div style="left:70.6px;top:356.37px;font:14.8px/19px 'Liberation Sans', sans-serif;color:#1e1e1e;white-space:pre">oExtraDetail</div>
<div style="left:70.6px;top:378.37px;font:14.8px/19px 'Liberation Sans', sans-serif;color:#1e1e1e;white-space:pre">oBucketItem_Title</div>
<div style="left:70.6px;top:400.37px;font:14.8px/19px 'Liberation Sans', sans-serif;color:#1e1e1e;white-space:pre">oBucketItem_Checked</div>
<div style="left:70.6px;top:422.37px;font:14.8px/19px 'Liberation Sans', sans-serif;color:#1e1e1e;white-space:pre">oBucketItemDescription</div>
<div style="left:70.6px;top:444.37px;font:14.8px/19px 'Liberation Sans', sans-serif;color:#1e1e1e;white-space:pre">oWebGroup1</div>
<div style="left:85.6px;top:466.37px;font:14.8px/19px 'Liberation Sans', sans-serif;color:#1e1e1e;white-space:pre">oWebImage1</div>
<div style="left:85.6px;top:488.37px;font:14.8px/19px 'Liberation Sans', sans-serif;color:#1e1e1e;white-space:pre">oWebFileUploadButton1</div>
<div style="left:85.6px;top:510.37px;font:14.8px/19px 'Liberation Sans', sans-serif;color:#1e1e1e;white-space:pre">oBucketItem_Image</div>
<div style="left:55.6px;top:532.37px;font:14.8px/19px 'Liberation Sans', sans-serif;color:#1e1e1e;white-space:pre">oActionGroup</div>
<div style="left:55.6px;top:554.37px;font:14.8px/19px 'Liberation Sans', sans-serif;color:#1e1e1e;white-space:pre">SetActionButtons</div>
<div style="left:36px;top:554.37px;font:italic 14px/19px 'Liberation Serif', serif;color:#555;white-space:pre">px</div>
<div style="left:55.6px;top:576.37px;font:14.8px/19px 'Liberation Sans', sans-serif;color:#1e1e1e;white-space:pre">OnViewSaved</div>
<div style="left:36px;top:576.37px;font:italic 14px/19px 'Liberation Serif', serif;color:#555;white-space:pre">px</div>
</div>
<div style="left:0px;top:975px;width:1918px;height:27px;background:#dcdcdc;"></div>
<div style="left:1px;top:975px;width:85px;height:27px;background:#dcdcdc;"></div>
<div style="left:1px;top:975px;width:1px;height:27px;background:#c8c8c8;"></div>
<div style="left:86px;top:975px;width:79px;height:27px;background:#ebebeb;"></div>
<div style="left:1093px;top:975px;width:82px;height:27px;background:#dedede;"></div>
<div style="left:1093px;top:975px;width:1px;height:27px;background:#c8c8c8;"></div>
<div style="left:1174px;top:977px;width:1px;height:23px;background:#c8c8c8;"></div>
<div style="left:1175px;top:975px;width:114px;height:27px;background:#dedede;"></div>
<div style="left:1288px;top:977px;width:1px;height:23px;background:#c8c8c8;"></div>
<div style="left:1289px;top:975px;width:89px;height:27px;background:#dedede;"></div>
<div style="left:1378px;top:975px;width:80px;height:27px;background:#ececec;"></div>
<div style="left:1457px;top:975px;width:1px;height:27px;background:#d0d0d0;"></div>
<div style="left:0px;top:1002px;width:1918px;height:1px;background:#d2e2ea;"></div>
<div style="left:0px;top:1003px;width:1918px;height:1px;background:#c6eafc;"></div>
<div style="left:0px;top:1004px;width:1918px;height:1px;background:#1e5e98;"></div>
<div style="left:31.8px;top:980.04px;font:14.6px/19px 'Liberation Sans', sans-serif;color:#222;white-space:pre;">Globals</div>
<div style="left:115.7px;top:980.04px;font:14.6px/19px 'Liberation Sans', sans-serif;color:#222;white-space:pre;letter-spacing:-0.36px;">Locals</div>
<div style="left:1122.75px;top:980.04px;font:14.6px/19px 'Liberation Sans', sans-serif;color:#222;white-space:pre;letter-spacing:0.36px;">Output</div>
<div style="left:1206px;top:980.04px;font:14.6px/19px 'Liberation Sans', sans-serif;color:#222;white-space:pre;">Breakpoints</div>
<div style="left:1320px;top:980.04px;font:14.6px/19px 'Liberation Sans', sans-serif;color:#222;white-space:pre;letter-spacing:-0.5px;">Watches</div>
<div style="left:1408.5px;top:980.04px;font:14.6px/19px 'Liberation Sans', sans-serif;color:#222;white-space:pre;letter-spacing:-0.7px;">Tables</div>
<svg style="left:0;top:960px" width="1918" height="68" viewBox="0 960 1918 68"><path d="M10 980H9V989H10M26 980H27V989H26" fill="none" stroke="#444" stroke-width="1"/><circle cx="18" cy="984.5" r="4.2" fill="none" stroke="#444" stroke-width="1.1"/><path d="M14 983H22M14 986H22M16.5 980.5V988.5M19.5 980.5V988.5" stroke="#444" stroke-width="0.9"/><circle cx="15.100000000000001" cy="995" r="1.9" fill="none" stroke="#444" stroke-width="1.1"/><circle cx="20.9" cy="995" r="1.9" fill="none" stroke="#444" stroke-width="1.1"/><path d="M12.7 994L17 990.5M23.3 994L19 990.5M17 994.5H19" fill="none" stroke="#444" stroke-width="1"/><path d="M94 980H93V989H94M110 980H111V989H110" fill="none" stroke="#444" stroke-width="1"/><path d="M96.5 984L102 980.5L107.5 983.5V987L102 990L96.5 987Z" fill="#444"/><circle cx="99.1" cy="996" r="1.9" fill="none" stroke="#444" stroke-width="1.1"/><circle cx="104.9" cy="996" r="1.9" fill="none" stroke="#444" stroke-width="1.1"/><path d="M96.7 995L101 991.5M107.3 995L103 991.5M101 995.5H103" fill="none" stroke="#444" stroke-width="1"/><path d="M1110 980.8H1101.8V997H1110" fill="none" stroke="#444" stroke-width="1.4"/><path d="M1106 989H1113" stroke="#444" stroke-width="2.6"/><path d="M1111.5 984L1118.5 989L1111.5 994Z" fill="#444"/><path d="M1186.5 988V981H1200V991.5H1194" fill="none" stroke="#444" stroke-width="1.2"/><rect x="1186" y="980.5" width="14.5" height="2.5" fill="#444"/><circle cx="1189" cy="991.5" r="5" fill="#e4341a"/><circle cx="1301" cy="991.5" r="3.2" fill="none" stroke="#444" stroke-width="1.8"/><circle cx="1311" cy="991.5" r="3.2" fill="none" stroke="#444" stroke-width="1.8"/><path d="M1304 990.5H1308M1298.5 989.5L1302.5 983.5H1305.5M1313.5 989.5L1309.5 983.5H1306.5" fill="none" stroke="#444" stroke-width="1.5"/><rect x="1388.5" y="981.5" width="15" height="13.5" fill="none" stroke="#444" stroke-width="1.1"/><rect x="1388" y="981" width="16" height="2.5" fill="#444"/><path d="M1388.5 987H1403.5M1388.5 991H1403.5M1393.5 983V995M1398.5 983V995" stroke="#444" stroke-width="1"/><rect x="1384" y="992" width="11" height="7" fill="#ececec"/><circle cx="1386.6" cy="996" r="1.9" fill="none" stroke="#444" stroke-width="1.1"/><circle cx="1392.4" cy="996" r="1.9" fill="none" stroke="#444" stroke-width="1.1"/><path d="M1384.2 995L1388.5 991.5M1394.8 995L1390.5 991.5M1388.5 995.5H1390.5" fill="none" stroke="#444" stroke-width="1"/><circle cx="1642" cy="1017.6" r="9.6" fill="#f6d8cc" stroke="#d8ecfa" stroke-width="1"/><circle cx="1642" cy="1017.6" r="8.6" fill="none" stroke="#a8402e" stroke-width="1.2"/><path d="M1642 1012V1020" stroke="#a8301a" stroke-width="1.8"/><rect x="1641" y="1022" width="2" height="2" fill="#a8301a"/><circle cx="1727.8" cy="1017.6" r="9.6" fill="#ececec" stroke="#cde8fa" stroke-width="1"/><circle cx="1727.8" cy="1017.6" r="8.2" fill="none" stroke="#8a8a8a" stroke-width="2.4"/><path d="M1722 1011.8L1733.6 1023.4" stroke="#8a8a8a" stroke-width="2.4"/></svg>
</body></html>
